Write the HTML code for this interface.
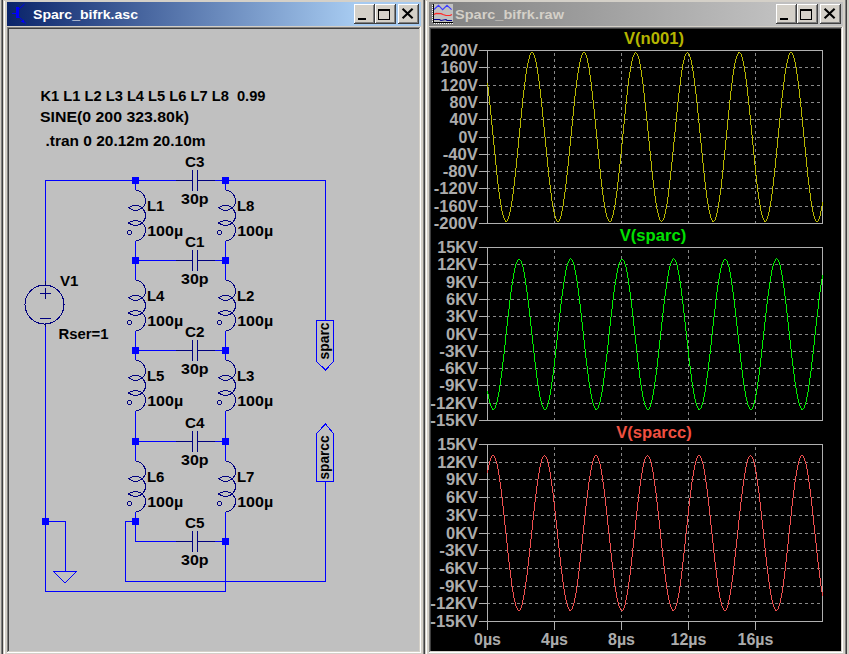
<!DOCTYPE html>
<html><head><meta charset="utf-8"><style>
html,body{margin:0;padding:0;background:#D4D0C8;overflow:hidden}
svg{display:block}
</style></head><body>
<svg width="849" height="654" viewBox="0 0 849 654">
<rect x="0" y="0" width="849" height="654" fill="#D4D0C8"/><rect x="1" y="0" width="1" height="654" fill="#808080"/><rect x="2" y="0" width="1" height="654" fill="#404040"/><rect x="4" y="1" width="1" height="653" fill="#FFFFFF"/><rect x="423" y="0" width="1" height="654" fill="#808080"/><rect x="424" y="0" width="1" height="654" fill="#404040"/><rect x="426" y="1" width="1" height="653" fill="#FFFFFF"/><rect x="845" y="0" width="1" height="654" fill="#808080"/><rect x="846" y="0" width="1" height="654" fill="#404040"/><defs>
<linearGradient id="ga" x1="0" x2="1" y1="0" y2="0"><stop offset="0" stop-color="#0A246A"/><stop offset="0.835" stop-color="#A6CAF0"/><stop offset="1" stop-color="#A6CAF0"/></linearGradient>
<linearGradient id="gi" x1="0" x2="1" y1="0" y2="0"><stop offset="0" stop-color="#808080"/><stop offset="0.835" stop-color="#C0C0C0"/><stop offset="1" stop-color="#C0C0C0"/></linearGradient>
</defs><rect x="7" y="2" width="414" height="24" fill="url(#ga)"/><rect x="429" y="2" width="414" height="24" fill="url(#gi)"/><rect x="7" y="27" width="414" height="1" fill="#808080"/><rect x="7" y="27" width="1" height="626" fill="#808080"/><rect x="8" y="28" width="412" height="1" fill="#404040"/><rect x="8" y="28" width="1" height="624" fill="#404040"/><rect x="7" y="652" width="414" height="1" fill="#FFFFFF"/><rect x="420" y="27" width="1" height="626" fill="#FFFFFF"/><rect x="8" y="651" width="412" height="1" fill="#D4D0C8"/><rect x="419" y="28" width="1" height="624" fill="#D4D0C8"/><rect x="9" y="29" width="410" height="622" fill="#C0C0C0"/><rect x="429" y="27" width="414" height="1" fill="#808080"/><rect x="429" y="27" width="1" height="626" fill="#808080"/><rect x="430" y="28" width="412" height="1" fill="#404040"/><rect x="430" y="28" width="1" height="624" fill="#404040"/><rect x="429" y="652" width="414" height="1" fill="#FFFFFF"/><rect x="842" y="27" width="1" height="626" fill="#FFFFFF"/><rect x="430" y="651" width="412" height="1" fill="#D4D0C8"/><rect x="841" y="28" width="1" height="624" fill="#D4D0C8"/><rect x="431" y="29" width="410" height="622" fill="#000000"/><rect x="354" y="4" width="21" height="20" fill="#404040"/><rect x="354" y="4" width="20" height="19" fill="#FFFFFF"/><rect x="355" y="5" width="19" height="18" fill="#808080"/><rect x="355" y="5" width="18" height="17" fill="#D4D0C8"/><rect x="358" y="18" width="8" height="2" fill="#000"/><rect x="375" y="4" width="21" height="20" fill="#404040"/><rect x="375" y="4" width="20" height="19" fill="#FFFFFF"/><rect x="376" y="5" width="19" height="18" fill="#808080"/><rect x="376" y="5" width="18" height="17" fill="#D4D0C8"/><rect x="378.5" y="9.5" width="11" height="10" fill="none" stroke="#000" stroke-width="1"/><rect x="378" y="9" width="12" height="2" fill="#000"/><rect x="398" y="4" width="21" height="20" fill="#404040"/><rect x="398" y="4" width="20" height="19" fill="#FFFFFF"/><rect x="399" y="5" width="19" height="18" fill="#808080"/><rect x="399" y="5" width="18" height="17" fill="#D4D0C8"/><path d="M402.6,8.8L412.6,18.3M412.6,8.8L402.6,18.3" stroke="#000" stroke-width="2.1" stroke-linecap="butt"/><rect x="776" y="4" width="21" height="20" fill="#404040"/><rect x="776" y="4" width="20" height="19" fill="#FFFFFF"/><rect x="777" y="5" width="19" height="18" fill="#808080"/><rect x="777" y="5" width="18" height="17" fill="#D4D0C8"/><rect x="780" y="18" width="8" height="2" fill="#000"/><rect x="797" y="4" width="21" height="20" fill="#404040"/><rect x="797" y="4" width="20" height="19" fill="#FFFFFF"/><rect x="798" y="5" width="19" height="18" fill="#808080"/><rect x="798" y="5" width="18" height="17" fill="#D4D0C8"/><rect x="800.5" y="9.5" width="11" height="10" fill="none" stroke="#000" stroke-width="1"/><rect x="800" y="9" width="12" height="2" fill="#000"/><rect x="820" y="4" width="21" height="20" fill="#404040"/><rect x="820" y="4" width="20" height="19" fill="#FFFFFF"/><rect x="821" y="5" width="19" height="18" fill="#808080"/><rect x="821" y="5" width="18" height="17" fill="#D4D0C8"/><path d="M824.6,8.8L834.6,18.3M834.6,8.8L824.6,18.3" stroke="#000" stroke-width="2.1" stroke-linecap="butt"/><text x="33" y="18.5" font-family='"Liberation Sans", sans-serif' font-weight="bold" font-size="13" fill="#FFFFFF" textLength="105" lengthAdjust="spacingAndGlyphs">Sparc_bifrk.asc</text><text x="455" y="18.5" font-family='"Liberation Sans", sans-serif' font-weight="bold" font-size="13" fill="#D4D0C8" textLength="109" lengthAdjust="spacingAndGlyphs">Sparc_bifrk.raw</text><g fill="#0000FF" stroke="none"><rect x="12" y="13" width="5" height="1"/><rect x="16" y="7" width="3" height="11"/></g><path d="M18.5,9.5L24.5,4M18.5,16.5L26,23.5" stroke="#0000EE" stroke-width="1"/><path d="M20.5,21.5L24,19.5L24,23Z" fill="#0000FF"/><rect x="433" y="4" width="20" height="19" fill="#C0C0C0"/><rect x="433" y="4" width="1" height="19" fill="#000"/><rect x="433" y="22" width="20" height="1" fill="#000"/><rect x="432" y="5" width="1" height="1" fill="#FFFFFF"/><rect x="432" y="7" width="1" height="1" fill="#FFFFFF"/><rect x="432" y="9" width="1" height="1" fill="#FFFFFF"/><rect x="432" y="11" width="1" height="1" fill="#FFFFFF"/><rect x="432" y="13" width="1" height="1" fill="#FFFFFF"/><rect x="432" y="15" width="1" height="1" fill="#FFFFFF"/><rect x="432" y="17" width="1" height="1" fill="#FFFFFF"/><rect x="432" y="19" width="1" height="1" fill="#FFFFFF"/><rect x="432" y="21" width="1" height="1" fill="#FFFFFF"/><rect x="434" y="23" width="1" height="1" fill="#FFFFFF"/><rect x="436" y="23" width="1" height="1" fill="#FFFFFF"/><rect x="438" y="23" width="1" height="1" fill="#FFFFFF"/><rect x="440" y="23" width="1" height="1" fill="#FFFFFF"/><rect x="442" y="23" width="1" height="1" fill="#FFFFFF"/><rect x="444" y="23" width="1" height="1" fill="#FFFFFF"/><rect x="446" y="23" width="1" height="1" fill="#FFFFFF"/><rect x="448" y="23" width="1" height="1" fill="#FFFFFF"/><rect x="450" y="23" width="1" height="1" fill="#FFFFFF"/><rect x="452" y="23" width="1" height="1" fill="#FFFFFF"/><path d="M434,9.5L438.5,5.3L442.6,9.6L447,5.3L451.6,9.6" fill="none" stroke="#3C3CFF" stroke-width="1.1"/><path d="M434,14.5L436,13.4L441,13.6L443,14.5L446,15.5L450,15.5L452,14.5" fill="none" stroke="#FF2828" stroke-width="1.2"/><path d="M434,19.5H439.5L441,20.5L446,19.5L447,20.5H452" fill="none" stroke="#000090" stroke-width="1.1"/><g><rect x="45" y="180" width="281" height="1" fill="#0000FF"/><rect x="45" y="180" width="1" height="105" fill="#0000FF"/><rect x="45" y="324" width="1" height="268" fill="#0000FF"/><rect x="45" y="591" width="181" height="1" fill="#0000FF"/><rect x="225" y="541" width="1" height="51" fill="#0000FF"/><rect x="45" y="521" width="21" height="1" fill="#0000FF"/><rect x="65" y="521" width="1" height="51" fill="#0000FF"/><rect x="325" y="180" width="1" height="141" fill="#0000FF"/><rect x="325" y="481" width="1" height="101" fill="#0000FF"/><rect x="125" y="581" width="201" height="1" fill="#0000FF"/><rect x="125" y="521" width="1" height="61" fill="#0000FF"/><rect x="125" y="521" width="11" height="1" fill="#0000FF"/><rect x="135" y="521" width="1" height="21" fill="#0000FF"/><rect x="135" y="260" width="91" height="1" fill="#0000FF"/><rect x="135" y="350" width="91" height="1" fill="#0000FF"/><rect x="135" y="441" width="91" height="1" fill="#0000FF"/><rect x="135" y="541" width="91" height="1" fill="#0000FF"/><rect x="135" y="180" width="1" height="342" fill="#0000FF"/><rect x="225" y="180" width="1" height="362" fill="#0000FF"/><rect x="136" y="179" width="88" height="3" fill="#C0C0C0"/><rect x="136" y="180" width="40" height="1" fill="#0000FF"/><rect x="176" y="180" width="17" height="1" fill="#000080"/><rect x="197" y="180" width="18" height="1" fill="#000080"/><rect x="215" y="180" width="10" height="1" fill="#0000FF"/><rect x="192" y="170" width="1" height="21" fill="#000080"/><rect x="197" y="170" width="1" height="21" fill="#000080"/><rect x="136" y="259" width="88" height="3" fill="#C0C0C0"/><rect x="136" y="260" width="40" height="1" fill="#0000FF"/><rect x="176" y="260" width="17" height="1" fill="#000080"/><rect x="197" y="260" width="18" height="1" fill="#000080"/><rect x="215" y="260" width="10" height="1" fill="#0000FF"/><rect x="192" y="250" width="1" height="21" fill="#000080"/><rect x="197" y="250" width="1" height="21" fill="#000080"/><rect x="136" y="349" width="88" height="3" fill="#C0C0C0"/><rect x="136" y="350" width="40" height="1" fill="#0000FF"/><rect x="176" y="350" width="17" height="1" fill="#000080"/><rect x="197" y="350" width="18" height="1" fill="#000080"/><rect x="215" y="350" width="10" height="1" fill="#0000FF"/><rect x="192" y="340" width="1" height="21" fill="#000080"/><rect x="197" y="340" width="1" height="21" fill="#000080"/><rect x="136" y="440" width="88" height="3" fill="#C0C0C0"/><rect x="136" y="441" width="40" height="1" fill="#0000FF"/><rect x="176" y="441" width="17" height="1" fill="#000080"/><rect x="197" y="441" width="18" height="1" fill="#000080"/><rect x="215" y="441" width="10" height="1" fill="#0000FF"/><rect x="192" y="431" width="1" height="21" fill="#000080"/><rect x="197" y="431" width="1" height="21" fill="#000080"/><rect x="136" y="540" width="88" height="3" fill="#C0C0C0"/><rect x="136" y="541" width="40" height="1" fill="#0000FF"/><rect x="176" y="541" width="17" height="1" fill="#000080"/><rect x="197" y="541" width="18" height="1" fill="#000080"/><rect x="215" y="541" width="10" height="1" fill="#0000FF"/><rect x="192" y="531" width="1" height="21" fill="#000080"/><rect x="197" y="531" width="1" height="21" fill="#000080"/><rect x="135" y="190" width="1" height="51" fill="#C0C0C0"/><path d="M135.50,190.50A10,10 0 0 1 142.45,207.69M142.45,208.31A10,10 0 0 1 142.45,222.69M142.45,223.31A10,10 0 0 1 135.50,240.50" fill="none" stroke="#000080" stroke-width="1" shape-rendering="crispEdges"/><path d="M128.5,207.5Q135.5,203.5 142.5,207.5Q135.5,213.5 128.5,207.5Z" fill="none" stroke="#000080" stroke-width="1" shape-rendering="crispEdges"/><path d="M128.5,223.0Q135.5,218.0 142.5,223.0Q135.5,228.0 128.5,223.0Z" fill="none" stroke="#000080" stroke-width="1" shape-rendering="crispEdges"/><circle cx="129.5" cy="232.5" r="2" fill="none" stroke="#000080" stroke-width="1" shape-rendering="crispEdges"/><rect x="135" y="280" width="1" height="51" fill="#C0C0C0"/><path d="M135.50,280.50A10,10 0 0 1 142.45,297.69M142.45,298.31A10,10 0 0 1 142.45,312.69M142.45,313.31A10,10 0 0 1 135.50,330.50" fill="none" stroke="#000080" stroke-width="1" shape-rendering="crispEdges"/><path d="M128.5,297.5Q135.5,293.5 142.5,297.5Q135.5,303.5 128.5,297.5Z" fill="none" stroke="#000080" stroke-width="1" shape-rendering="crispEdges"/><path d="M128.5,313.0Q135.5,308.0 142.5,313.0Q135.5,318.0 128.5,313.0Z" fill="none" stroke="#000080" stroke-width="1" shape-rendering="crispEdges"/><circle cx="129.5" cy="322.5" r="2" fill="none" stroke="#000080" stroke-width="1" shape-rendering="crispEdges"/><rect x="135" y="360" width="1" height="51" fill="#C0C0C0"/><path d="M135.50,360.50A10,10 0 0 1 142.45,377.69M142.45,378.31A10,10 0 0 1 142.45,392.69M142.45,393.31A10,10 0 0 1 135.50,410.50" fill="none" stroke="#000080" stroke-width="1" shape-rendering="crispEdges"/><path d="M128.5,377.5Q135.5,373.5 142.5,377.5Q135.5,383.5 128.5,377.5Z" fill="none" stroke="#000080" stroke-width="1" shape-rendering="crispEdges"/><path d="M128.5,393.0Q135.5,388.0 142.5,393.0Q135.5,398.0 128.5,393.0Z" fill="none" stroke="#000080" stroke-width="1" shape-rendering="crispEdges"/><circle cx="129.5" cy="402.5" r="2" fill="none" stroke="#000080" stroke-width="1" shape-rendering="crispEdges"/><rect x="135" y="461" width="1" height="51" fill="#C0C0C0"/><path d="M135.50,461.50A10,10 0 0 1 142.45,478.69M142.45,479.31A10,10 0 0 1 142.45,493.69M142.45,494.31A10,10 0 0 1 135.50,511.50" fill="none" stroke="#000080" stroke-width="1" shape-rendering="crispEdges"/><path d="M128.5,478.5Q135.5,474.5 142.5,478.5Q135.5,484.5 128.5,478.5Z" fill="none" stroke="#000080" stroke-width="1" shape-rendering="crispEdges"/><path d="M128.5,494.0Q135.5,489.0 142.5,494.0Q135.5,499.0 128.5,494.0Z" fill="none" stroke="#000080" stroke-width="1" shape-rendering="crispEdges"/><circle cx="129.5" cy="503.5" r="2" fill="none" stroke="#000080" stroke-width="1" shape-rendering="crispEdges"/><rect x="225" y="190" width="1" height="51" fill="#C0C0C0"/><path d="M225.50,190.50A10,10 0 0 1 232.45,207.69M232.45,208.31A10,10 0 0 1 232.45,222.69M232.45,223.31A10,10 0 0 1 225.50,240.50" fill="none" stroke="#000080" stroke-width="1" shape-rendering="crispEdges"/><path d="M218.5,207.5Q225.5,203.5 232.5,207.5Q225.5,213.5 218.5,207.5Z" fill="none" stroke="#000080" stroke-width="1" shape-rendering="crispEdges"/><path d="M218.5,223.0Q225.5,218.0 232.5,223.0Q225.5,228.0 218.5,223.0Z" fill="none" stroke="#000080" stroke-width="1" shape-rendering="crispEdges"/><circle cx="219.5" cy="232.5" r="2" fill="none" stroke="#000080" stroke-width="1" shape-rendering="crispEdges"/><rect x="225" y="280" width="1" height="51" fill="#C0C0C0"/><path d="M225.50,280.50A10,10 0 0 1 232.45,297.69M232.45,298.31A10,10 0 0 1 232.45,312.69M232.45,313.31A10,10 0 0 1 225.50,330.50" fill="none" stroke="#000080" stroke-width="1" shape-rendering="crispEdges"/><path d="M218.5,297.5Q225.5,293.5 232.5,297.5Q225.5,303.5 218.5,297.5Z" fill="none" stroke="#000080" stroke-width="1" shape-rendering="crispEdges"/><path d="M218.5,313.0Q225.5,308.0 232.5,313.0Q225.5,318.0 218.5,313.0Z" fill="none" stroke="#000080" stroke-width="1" shape-rendering="crispEdges"/><circle cx="219.5" cy="322.5" r="2" fill="none" stroke="#000080" stroke-width="1" shape-rendering="crispEdges"/><rect x="225" y="360" width="1" height="51" fill="#C0C0C0"/><path d="M225.50,360.50A10,10 0 0 1 232.45,377.69M232.45,378.31A10,10 0 0 1 232.45,392.69M232.45,393.31A10,10 0 0 1 225.50,410.50" fill="none" stroke="#000080" stroke-width="1" shape-rendering="crispEdges"/><path d="M218.5,377.5Q225.5,373.5 232.5,377.5Q225.5,383.5 218.5,377.5Z" fill="none" stroke="#000080" stroke-width="1" shape-rendering="crispEdges"/><path d="M218.5,393.0Q225.5,388.0 232.5,393.0Q225.5,398.0 218.5,393.0Z" fill="none" stroke="#000080" stroke-width="1" shape-rendering="crispEdges"/><circle cx="219.5" cy="402.5" r="2" fill="none" stroke="#000080" stroke-width="1" shape-rendering="crispEdges"/><rect x="225" y="461" width="1" height="51" fill="#C0C0C0"/><path d="M225.50,461.50A10,10 0 0 1 232.45,478.69M232.45,479.31A10,10 0 0 1 232.45,493.69M232.45,494.31A10,10 0 0 1 225.50,511.50" fill="none" stroke="#000080" stroke-width="1" shape-rendering="crispEdges"/><path d="M218.5,478.5Q225.5,474.5 232.5,478.5Q225.5,484.5 218.5,478.5Z" fill="none" stroke="#000080" stroke-width="1" shape-rendering="crispEdges"/><path d="M218.5,494.0Q225.5,489.0 232.5,494.0Q225.5,499.0 218.5,494.0Z" fill="none" stroke="#000080" stroke-width="1" shape-rendering="crispEdges"/><circle cx="219.5" cy="503.5" r="2" fill="none" stroke="#000080" stroke-width="1" shape-rendering="crispEdges"/><rect x="132" y="177" width="7" height="7" fill="#0000FF"/><rect x="222" y="177" width="7" height="7" fill="#0000FF"/><rect x="132" y="257" width="7" height="7" fill="#0000FF"/><rect x="222" y="257" width="7" height="7" fill="#0000FF"/><rect x="132" y="347" width="7" height="7" fill="#0000FF"/><rect x="222" y="347" width="7" height="7" fill="#0000FF"/><rect x="132" y="438" width="7" height="7" fill="#0000FF"/><rect x="222" y="438" width="7" height="7" fill="#0000FF"/><rect x="132" y="518" width="7" height="7" fill="#0000FF"/><rect x="222" y="538" width="7" height="7" fill="#0000FF"/><rect x="42" y="518" width="7" height="7" fill="#0000FF"/><rect x="45" y="285" width="1" height="39" fill="#C0C0C0"/><circle cx="44.5" cy="304.5" r="19.5" fill="none" stroke="#000080" stroke-width="1" shape-rendering="crispEdges"/><rect x="45" y="281" width="1" height="5" fill="#000080"/><rect x="45" y="323" width="1" height="4" fill="#000080"/><rect x="40" y="293" width="11" height="1" fill="#000080"/><rect x="45" y="288" width="1" height="11" fill="#000080"/><rect x="40" y="318" width="11" height="1" fill="#000080"/><path d="M53.5,571.5H76.5L65,583Z" fill="none" stroke="#0000FF" stroke-width="1" shape-rendering="crispEdges"/><path d="M316.5,320.5H333.5V361.5L325.5,370L316.5,361.5Z" fill="none" stroke="#0000FF" stroke-width="1" shape-rendering="crispEdges"/><path d="M325.5,424L333.5,433.5V481.5H316.5V433.5Z" fill="none" stroke="#0000FF" stroke-width="1" shape-rendering="crispEdges"/><text x="40.5" y="100.8" font-family='"Liberation Sans", sans-serif' font-weight="bold" font-size="14" fill="#000" textLength="225" lengthAdjust="spacingAndGlyphs">K1 L1 L2 L3 L4 L5 L6 L7 L8&#160; 0.99</text><text x="40" y="121.6" font-family='"Liberation Sans", sans-serif' font-weight="bold" font-size="14" fill="#000" textLength="149" lengthAdjust="spacingAndGlyphs">SINE(0 200 323.80k)</text><text x="45.5" y="145.5" font-family='"Liberation Sans", sans-serif' font-weight="bold" font-size="14" fill="#000" textLength="160" lengthAdjust="spacingAndGlyphs">.tran 0 20.12m 20.10m</text><text x="60" y="285.8" font-family='"Liberation Sans", sans-serif' font-weight="bold" font-size="14" fill="#000" textLength="18.5" lengthAdjust="spacingAndGlyphs">V1</text><text x="58.5" y="338.5" font-family='"Liberation Sans", sans-serif' font-weight="bold" font-size="14" fill="#000" textLength="50" lengthAdjust="spacingAndGlyphs">Rser=1</text><text x="185" y="166.5" font-family='"Liberation Sans", sans-serif' font-weight="bold" font-size="14" fill="#000" textLength="19.5" lengthAdjust="spacingAndGlyphs">C3</text><text x="181" y="203.7" font-family='"Liberation Sans", sans-serif' font-weight="bold" font-size="14" fill="#000" textLength="27.5" lengthAdjust="spacingAndGlyphs">30p</text><text x="185" y="246.5" font-family='"Liberation Sans", sans-serif' font-weight="bold" font-size="14" fill="#000" textLength="19.5" lengthAdjust="spacingAndGlyphs">C1</text><text x="181" y="283.7" font-family='"Liberation Sans", sans-serif' font-weight="bold" font-size="14" fill="#000" textLength="27.5" lengthAdjust="spacingAndGlyphs">30p</text><text x="185" y="336.5" font-family='"Liberation Sans", sans-serif' font-weight="bold" font-size="14" fill="#000" textLength="19.5" lengthAdjust="spacingAndGlyphs">C2</text><text x="181" y="373.7" font-family='"Liberation Sans", sans-serif' font-weight="bold" font-size="14" fill="#000" textLength="27.5" lengthAdjust="spacingAndGlyphs">30p</text><text x="185" y="427.5" font-family='"Liberation Sans", sans-serif' font-weight="bold" font-size="14" fill="#000" textLength="19.5" lengthAdjust="spacingAndGlyphs">C4</text><text x="181" y="464.7" font-family='"Liberation Sans", sans-serif' font-weight="bold" font-size="14" fill="#000" textLength="27.5" lengthAdjust="spacingAndGlyphs">30p</text><text x="185" y="527.5" font-family='"Liberation Sans", sans-serif' font-weight="bold" font-size="14" fill="#000" textLength="19.5" lengthAdjust="spacingAndGlyphs">C5</text><text x="181" y="564.7" font-family='"Liberation Sans", sans-serif' font-weight="bold" font-size="14" fill="#000" textLength="27.5" lengthAdjust="spacingAndGlyphs">30p</text><text x="146.9" y="211.2" font-family='"Liberation Sans", sans-serif' font-weight="bold" font-size="14" fill="#000" textLength="17.5" lengthAdjust="spacingAndGlyphs">L1</text><text x="147.2" y="236" font-family='"Liberation Sans", sans-serif' font-weight="bold" font-size="14" fill="#000" textLength="36" lengthAdjust="spacingAndGlyphs">100µ</text><text x="146.9" y="301.2" font-family='"Liberation Sans", sans-serif' font-weight="bold" font-size="14" fill="#000" textLength="17.5" lengthAdjust="spacingAndGlyphs">L4</text><text x="147.2" y="326" font-family='"Liberation Sans", sans-serif' font-weight="bold" font-size="14" fill="#000" textLength="36" lengthAdjust="spacingAndGlyphs">100µ</text><text x="146.9" y="381.2" font-family='"Liberation Sans", sans-serif' font-weight="bold" font-size="14" fill="#000" textLength="17.5" lengthAdjust="spacingAndGlyphs">L5</text><text x="147.2" y="406" font-family='"Liberation Sans", sans-serif' font-weight="bold" font-size="14" fill="#000" textLength="36" lengthAdjust="spacingAndGlyphs">100µ</text><text x="146.9" y="482.2" font-family='"Liberation Sans", sans-serif' font-weight="bold" font-size="14" fill="#000" textLength="17.5" lengthAdjust="spacingAndGlyphs">L6</text><text x="147.2" y="507" font-family='"Liberation Sans", sans-serif' font-weight="bold" font-size="14" fill="#000" textLength="36" lengthAdjust="spacingAndGlyphs">100µ</text><text x="236.9" y="211.2" font-family='"Liberation Sans", sans-serif' font-weight="bold" font-size="14" fill="#000" textLength="17.5" lengthAdjust="spacingAndGlyphs">L8</text><text x="237.2" y="236" font-family='"Liberation Sans", sans-serif' font-weight="bold" font-size="14" fill="#000" textLength="36" lengthAdjust="spacingAndGlyphs">100µ</text><text x="236.9" y="301.2" font-family='"Liberation Sans", sans-serif' font-weight="bold" font-size="14" fill="#000" textLength="17.5" lengthAdjust="spacingAndGlyphs">L2</text><text x="237.2" y="326" font-family='"Liberation Sans", sans-serif' font-weight="bold" font-size="14" fill="#000" textLength="36" lengthAdjust="spacingAndGlyphs">100µ</text><text x="236.9" y="381.2" font-family='"Liberation Sans", sans-serif' font-weight="bold" font-size="14" fill="#000" textLength="17.5" lengthAdjust="spacingAndGlyphs">L3</text><text x="237.2" y="406" font-family='"Liberation Sans", sans-serif' font-weight="bold" font-size="14" fill="#000" textLength="36" lengthAdjust="spacingAndGlyphs">100µ</text><text x="236.9" y="482.2" font-family='"Liberation Sans", sans-serif' font-weight="bold" font-size="14" fill="#000" textLength="17.5" lengthAdjust="spacingAndGlyphs">L7</text><text x="237.2" y="507" font-family='"Liberation Sans", sans-serif' font-weight="bold" font-size="14" fill="#000" textLength="36" lengthAdjust="spacingAndGlyphs">100µ</text><text transform="translate(329.3,359.5) rotate(-90)" font-family='"Liberation Sans", sans-serif' font-weight="bold" font-size="14" fill="#000" textLength="37" lengthAdjust="spacingAndGlyphs">sparc</text><text transform="translate(329.3,479.5) rotate(-90)" font-family='"Liberation Sans", sans-serif' font-weight="bold" font-size="14" fill="#000" textLength="44" lengthAdjust="spacingAndGlyphs">sparcc</text></g><g><rect x="479" y="50" width="8" height="1" fill="#B0B0B0"/><text x="478" y="56" text-anchor="end" font-family='"Liberation Sans", sans-serif' font-weight="bold" font-size="16" fill="#ACACAC" textLength="37.39" lengthAdjust="spacingAndGlyphs">200V</text><rect x="479" y="67" width="8" height="1" fill="#B0B0B0"/><path d="M488,67.5h1M489,67.5h1M493,67.5h1M494,67.5h1M495,67.5h1M499,67.5h1M500,67.5h1M501,67.5h1M505,67.5h1M506,67.5h1M507,67.5h1M511,67.5h1M512,67.5h1M513,67.5h1M517,67.5h1M518,67.5h1M519,67.5h1M523,67.5h1M524,67.5h1M525,67.5h1M529,67.5h1M530,67.5h1M531,67.5h1M535,67.5h1M536,67.5h1M537,67.5h1M541,67.5h1M542,67.5h1M543,67.5h1M547,67.5h1M548,67.5h1M549,67.5h1M553,67.5h1M554,67.5h1M555,67.5h1M559,67.5h1M560,67.5h1M561,67.5h1M565,67.5h1M566,67.5h1M567,67.5h1M571,67.5h1M572,67.5h1M573,67.5h1M577,67.5h1M578,67.5h1M579,67.5h1M583,67.5h1M584,67.5h1M585,67.5h1M589,67.5h1M590,67.5h1M591,67.5h1M595,67.5h1M596,67.5h1M597,67.5h1M601,67.5h1M602,67.5h1M603,67.5h1M607,67.5h1M608,67.5h1M609,67.5h1M613,67.5h1M614,67.5h1M615,67.5h1M619,67.5h1M620,67.5h1M621,67.5h1M625,67.5h1M626,67.5h1M627,67.5h1M631,67.5h1M632,67.5h1M633,67.5h1M637,67.5h1M638,67.5h1M639,67.5h1M643,67.5h1M644,67.5h1M645,67.5h1M649,67.5h1M650,67.5h1M651,67.5h1M655,67.5h1M656,67.5h1M657,67.5h1M661,67.5h1M662,67.5h1M663,67.5h1M667,67.5h1M668,67.5h1M669,67.5h1M673,67.5h1M674,67.5h1M675,67.5h1M679,67.5h1M680,67.5h1M681,67.5h1M685,67.5h1M686,67.5h1M687,67.5h1M691,67.5h1M692,67.5h1M693,67.5h1M697,67.5h1M698,67.5h1M699,67.5h1M703,67.5h1M704,67.5h1M705,67.5h1M709,67.5h1M710,67.5h1M711,67.5h1M715,67.5h1M716,67.5h1M717,67.5h1M721,67.5h1M722,67.5h1M723,67.5h1M727,67.5h1M728,67.5h1M729,67.5h1M733,67.5h1M734,67.5h1M735,67.5h1M739,67.5h1M740,67.5h1M741,67.5h1M745,67.5h1M746,67.5h1M747,67.5h1M751,67.5h1M752,67.5h1M753,67.5h1M757,67.5h1M758,67.5h1M759,67.5h1M763,67.5h1M764,67.5h1M765,67.5h1M769,67.5h1M770,67.5h1M771,67.5h1M775,67.5h1M776,67.5h1M777,67.5h1M781,67.5h1M782,67.5h1M783,67.5h1M787,67.5h1M788,67.5h1M789,67.5h1M793,67.5h1M794,67.5h1M795,67.5h1M799,67.5h1M800,67.5h1M801,67.5h1M805,67.5h1M806,67.5h1M807,67.5h1M811,67.5h1M812,67.5h1M813,67.5h1M817,67.5h1M818,67.5h1M819,67.5h1" stroke="#888888" stroke-width="1"/><text x="478" y="73" text-anchor="end" font-family='"Liberation Sans", sans-serif' font-weight="bold" font-size="16" fill="#ACACAC" textLength="37.39" lengthAdjust="spacingAndGlyphs">160V</text><rect x="479" y="85" width="8" height="1" fill="#B0B0B0"/><path d="M488,85.5h1M489,85.5h1M493,85.5h1M494,85.5h1M495,85.5h1M499,85.5h1M500,85.5h1M501,85.5h1M505,85.5h1M506,85.5h1M507,85.5h1M511,85.5h1M512,85.5h1M513,85.5h1M517,85.5h1M518,85.5h1M519,85.5h1M523,85.5h1M524,85.5h1M525,85.5h1M529,85.5h1M530,85.5h1M531,85.5h1M535,85.5h1M536,85.5h1M537,85.5h1M541,85.5h1M542,85.5h1M543,85.5h1M547,85.5h1M548,85.5h1M549,85.5h1M553,85.5h1M554,85.5h1M555,85.5h1M559,85.5h1M560,85.5h1M561,85.5h1M565,85.5h1M566,85.5h1M567,85.5h1M571,85.5h1M572,85.5h1M573,85.5h1M577,85.5h1M578,85.5h1M579,85.5h1M583,85.5h1M584,85.5h1M585,85.5h1M589,85.5h1M590,85.5h1M591,85.5h1M595,85.5h1M596,85.5h1M597,85.5h1M601,85.5h1M602,85.5h1M603,85.5h1M607,85.5h1M608,85.5h1M609,85.5h1M613,85.5h1M614,85.5h1M615,85.5h1M619,85.5h1M620,85.5h1M621,85.5h1M625,85.5h1M626,85.5h1M627,85.5h1M631,85.5h1M632,85.5h1M633,85.5h1M637,85.5h1M638,85.5h1M639,85.5h1M643,85.5h1M644,85.5h1M645,85.5h1M649,85.5h1M650,85.5h1M651,85.5h1M655,85.5h1M656,85.5h1M657,85.5h1M661,85.5h1M662,85.5h1M663,85.5h1M667,85.5h1M668,85.5h1M669,85.5h1M673,85.5h1M674,85.5h1M675,85.5h1M679,85.5h1M680,85.5h1M681,85.5h1M685,85.5h1M686,85.5h1M687,85.5h1M691,85.5h1M692,85.5h1M693,85.5h1M697,85.5h1M698,85.5h1M699,85.5h1M703,85.5h1M704,85.5h1M705,85.5h1M709,85.5h1M710,85.5h1M711,85.5h1M715,85.5h1M716,85.5h1M717,85.5h1M721,85.5h1M722,85.5h1M723,85.5h1M727,85.5h1M728,85.5h1M729,85.5h1M733,85.5h1M734,85.5h1M735,85.5h1M739,85.5h1M740,85.5h1M741,85.5h1M745,85.5h1M746,85.5h1M747,85.5h1M751,85.5h1M752,85.5h1M753,85.5h1M757,85.5h1M758,85.5h1M759,85.5h1M763,85.5h1M764,85.5h1M765,85.5h1M769,85.5h1M770,85.5h1M771,85.5h1M775,85.5h1M776,85.5h1M777,85.5h1M781,85.5h1M782,85.5h1M783,85.5h1M787,85.5h1M788,85.5h1M789,85.5h1M793,85.5h1M794,85.5h1M795,85.5h1M799,85.5h1M800,85.5h1M801,85.5h1M805,85.5h1M806,85.5h1M807,85.5h1M811,85.5h1M812,85.5h1M813,85.5h1M817,85.5h1M818,85.5h1M819,85.5h1" stroke="#888888" stroke-width="1"/><text x="478" y="91" text-anchor="end" font-family='"Liberation Sans", sans-serif' font-weight="bold" font-size="16" fill="#ACACAC" textLength="37.39" lengthAdjust="spacingAndGlyphs">120V</text><rect x="479" y="102" width="8" height="1" fill="#B0B0B0"/><path d="M488,102.5h1M489,102.5h1M493,102.5h1M494,102.5h1M495,102.5h1M499,102.5h1M500,102.5h1M501,102.5h1M505,102.5h1M506,102.5h1M507,102.5h1M511,102.5h1M512,102.5h1M513,102.5h1M517,102.5h1M518,102.5h1M519,102.5h1M523,102.5h1M524,102.5h1M525,102.5h1M529,102.5h1M530,102.5h1M531,102.5h1M535,102.5h1M536,102.5h1M537,102.5h1M541,102.5h1M542,102.5h1M543,102.5h1M547,102.5h1M548,102.5h1M549,102.5h1M553,102.5h1M554,102.5h1M555,102.5h1M559,102.5h1M560,102.5h1M561,102.5h1M565,102.5h1M566,102.5h1M567,102.5h1M571,102.5h1M572,102.5h1M573,102.5h1M577,102.5h1M578,102.5h1M579,102.5h1M583,102.5h1M584,102.5h1M585,102.5h1M589,102.5h1M590,102.5h1M591,102.5h1M595,102.5h1M596,102.5h1M597,102.5h1M601,102.5h1M602,102.5h1M603,102.5h1M607,102.5h1M608,102.5h1M609,102.5h1M613,102.5h1M614,102.5h1M615,102.5h1M619,102.5h1M620,102.5h1M621,102.5h1M625,102.5h1M626,102.5h1M627,102.5h1M631,102.5h1M632,102.5h1M633,102.5h1M637,102.5h1M638,102.5h1M639,102.5h1M643,102.5h1M644,102.5h1M645,102.5h1M649,102.5h1M650,102.5h1M651,102.5h1M655,102.5h1M656,102.5h1M657,102.5h1M661,102.5h1M662,102.5h1M663,102.5h1M667,102.5h1M668,102.5h1M669,102.5h1M673,102.5h1M674,102.5h1M675,102.5h1M679,102.5h1M680,102.5h1M681,102.5h1M685,102.5h1M686,102.5h1M687,102.5h1M691,102.5h1M692,102.5h1M693,102.5h1M697,102.5h1M698,102.5h1M699,102.5h1M703,102.5h1M704,102.5h1M705,102.5h1M709,102.5h1M710,102.5h1M711,102.5h1M715,102.5h1M716,102.5h1M717,102.5h1M721,102.5h1M722,102.5h1M723,102.5h1M727,102.5h1M728,102.5h1M729,102.5h1M733,102.5h1M734,102.5h1M735,102.5h1M739,102.5h1M740,102.5h1M741,102.5h1M745,102.5h1M746,102.5h1M747,102.5h1M751,102.5h1M752,102.5h1M753,102.5h1M757,102.5h1M758,102.5h1M759,102.5h1M763,102.5h1M764,102.5h1M765,102.5h1M769,102.5h1M770,102.5h1M771,102.5h1M775,102.5h1M776,102.5h1M777,102.5h1M781,102.5h1M782,102.5h1M783,102.5h1M787,102.5h1M788,102.5h1M789,102.5h1M793,102.5h1M794,102.5h1M795,102.5h1M799,102.5h1M800,102.5h1M801,102.5h1M805,102.5h1M806,102.5h1M807,102.5h1M811,102.5h1M812,102.5h1M813,102.5h1M817,102.5h1M818,102.5h1M819,102.5h1" stroke="#888888" stroke-width="1"/><text x="478" y="108" text-anchor="end" font-family='"Liberation Sans", sans-serif' font-weight="bold" font-size="16" fill="#ACACAC" textLength="28.48" lengthAdjust="spacingAndGlyphs">80V</text><rect x="479" y="119" width="8" height="1" fill="#B0B0B0"/><path d="M488,119.5h1M489,119.5h1M493,119.5h1M494,119.5h1M495,119.5h1M499,119.5h1M500,119.5h1M501,119.5h1M505,119.5h1M506,119.5h1M507,119.5h1M511,119.5h1M512,119.5h1M513,119.5h1M517,119.5h1M518,119.5h1M519,119.5h1M523,119.5h1M524,119.5h1M525,119.5h1M529,119.5h1M530,119.5h1M531,119.5h1M535,119.5h1M536,119.5h1M537,119.5h1M541,119.5h1M542,119.5h1M543,119.5h1M547,119.5h1M548,119.5h1M549,119.5h1M553,119.5h1M554,119.5h1M555,119.5h1M559,119.5h1M560,119.5h1M561,119.5h1M565,119.5h1M566,119.5h1M567,119.5h1M571,119.5h1M572,119.5h1M573,119.5h1M577,119.5h1M578,119.5h1M579,119.5h1M583,119.5h1M584,119.5h1M585,119.5h1M589,119.5h1M590,119.5h1M591,119.5h1M595,119.5h1M596,119.5h1M597,119.5h1M601,119.5h1M602,119.5h1M603,119.5h1M607,119.5h1M608,119.5h1M609,119.5h1M613,119.5h1M614,119.5h1M615,119.5h1M619,119.5h1M620,119.5h1M621,119.5h1M625,119.5h1M626,119.5h1M627,119.5h1M631,119.5h1M632,119.5h1M633,119.5h1M637,119.5h1M638,119.5h1M639,119.5h1M643,119.5h1M644,119.5h1M645,119.5h1M649,119.5h1M650,119.5h1M651,119.5h1M655,119.5h1M656,119.5h1M657,119.5h1M661,119.5h1M662,119.5h1M663,119.5h1M667,119.5h1M668,119.5h1M669,119.5h1M673,119.5h1M674,119.5h1M675,119.5h1M679,119.5h1M680,119.5h1M681,119.5h1M685,119.5h1M686,119.5h1M687,119.5h1M691,119.5h1M692,119.5h1M693,119.5h1M697,119.5h1M698,119.5h1M699,119.5h1M703,119.5h1M704,119.5h1M705,119.5h1M709,119.5h1M710,119.5h1M711,119.5h1M715,119.5h1M716,119.5h1M717,119.5h1M721,119.5h1M722,119.5h1M723,119.5h1M727,119.5h1M728,119.5h1M729,119.5h1M733,119.5h1M734,119.5h1M735,119.5h1M739,119.5h1M740,119.5h1M741,119.5h1M745,119.5h1M746,119.5h1M747,119.5h1M751,119.5h1M752,119.5h1M753,119.5h1M757,119.5h1M758,119.5h1M759,119.5h1M763,119.5h1M764,119.5h1M765,119.5h1M769,119.5h1M770,119.5h1M771,119.5h1M775,119.5h1M776,119.5h1M777,119.5h1M781,119.5h1M782,119.5h1M783,119.5h1M787,119.5h1M788,119.5h1M789,119.5h1M793,119.5h1M794,119.5h1M795,119.5h1M799,119.5h1M800,119.5h1M801,119.5h1M805,119.5h1M806,119.5h1M807,119.5h1M811,119.5h1M812,119.5h1M813,119.5h1M817,119.5h1M818,119.5h1M819,119.5h1" stroke="#888888" stroke-width="1"/><text x="478" y="125" text-anchor="end" font-family='"Liberation Sans", sans-serif' font-weight="bold" font-size="16" fill="#ACACAC" textLength="28.48" lengthAdjust="spacingAndGlyphs">40V</text><rect x="479" y="137" width="8" height="1" fill="#B0B0B0"/><path d="M488,137.5h1M489,137.5h1M493,137.5h1M494,137.5h1M495,137.5h1M499,137.5h1M500,137.5h1M501,137.5h1M505,137.5h1M506,137.5h1M507,137.5h1M511,137.5h1M512,137.5h1M513,137.5h1M517,137.5h1M518,137.5h1M519,137.5h1M523,137.5h1M524,137.5h1M525,137.5h1M529,137.5h1M530,137.5h1M531,137.5h1M535,137.5h1M536,137.5h1M537,137.5h1M541,137.5h1M542,137.5h1M543,137.5h1M547,137.5h1M548,137.5h1M549,137.5h1M553,137.5h1M554,137.5h1M555,137.5h1M559,137.5h1M560,137.5h1M561,137.5h1M565,137.5h1M566,137.5h1M567,137.5h1M571,137.5h1M572,137.5h1M573,137.5h1M577,137.5h1M578,137.5h1M579,137.5h1M583,137.5h1M584,137.5h1M585,137.5h1M589,137.5h1M590,137.5h1M591,137.5h1M595,137.5h1M596,137.5h1M597,137.5h1M601,137.5h1M602,137.5h1M603,137.5h1M607,137.5h1M608,137.5h1M609,137.5h1M613,137.5h1M614,137.5h1M615,137.5h1M619,137.5h1M620,137.5h1M621,137.5h1M625,137.5h1M626,137.5h1M627,137.5h1M631,137.5h1M632,137.5h1M633,137.5h1M637,137.5h1M638,137.5h1M639,137.5h1M643,137.5h1M644,137.5h1M645,137.5h1M649,137.5h1M650,137.5h1M651,137.5h1M655,137.5h1M656,137.5h1M657,137.5h1M661,137.5h1M662,137.5h1M663,137.5h1M667,137.5h1M668,137.5h1M669,137.5h1M673,137.5h1M674,137.5h1M675,137.5h1M679,137.5h1M680,137.5h1M681,137.5h1M685,137.5h1M686,137.5h1M687,137.5h1M691,137.5h1M692,137.5h1M693,137.5h1M697,137.5h1M698,137.5h1M699,137.5h1M703,137.5h1M704,137.5h1M705,137.5h1M709,137.5h1M710,137.5h1M711,137.5h1M715,137.5h1M716,137.5h1M717,137.5h1M721,137.5h1M722,137.5h1M723,137.5h1M727,137.5h1M728,137.5h1M729,137.5h1M733,137.5h1M734,137.5h1M735,137.5h1M739,137.5h1M740,137.5h1M741,137.5h1M745,137.5h1M746,137.5h1M747,137.5h1M751,137.5h1M752,137.5h1M753,137.5h1M757,137.5h1M758,137.5h1M759,137.5h1M763,137.5h1M764,137.5h1M765,137.5h1M769,137.5h1M770,137.5h1M771,137.5h1M775,137.5h1M776,137.5h1M777,137.5h1M781,137.5h1M782,137.5h1M783,137.5h1M787,137.5h1M788,137.5h1M789,137.5h1M793,137.5h1M794,137.5h1M795,137.5h1M799,137.5h1M800,137.5h1M801,137.5h1M805,137.5h1M806,137.5h1M807,137.5h1M811,137.5h1M812,137.5h1M813,137.5h1M817,137.5h1M818,137.5h1M819,137.5h1" stroke="#888888" stroke-width="1"/><text x="478" y="143" text-anchor="end" font-family='"Liberation Sans", sans-serif' font-weight="bold" font-size="16" fill="#ACACAC" textLength="19.58" lengthAdjust="spacingAndGlyphs">0V</text><rect x="479" y="154" width="8" height="1" fill="#B0B0B0"/><path d="M488,154.5h1M489,154.5h1M493,154.5h1M494,154.5h1M495,154.5h1M499,154.5h1M500,154.5h1M501,154.5h1M505,154.5h1M506,154.5h1M507,154.5h1M511,154.5h1M512,154.5h1M513,154.5h1M517,154.5h1M518,154.5h1M519,154.5h1M523,154.5h1M524,154.5h1M525,154.5h1M529,154.5h1M530,154.5h1M531,154.5h1M535,154.5h1M536,154.5h1M537,154.5h1M541,154.5h1M542,154.5h1M543,154.5h1M547,154.5h1M548,154.5h1M549,154.5h1M553,154.5h1M554,154.5h1M555,154.5h1M559,154.5h1M560,154.5h1M561,154.5h1M565,154.5h1M566,154.5h1M567,154.5h1M571,154.5h1M572,154.5h1M573,154.5h1M577,154.5h1M578,154.5h1M579,154.5h1M583,154.5h1M584,154.5h1M585,154.5h1M589,154.5h1M590,154.5h1M591,154.5h1M595,154.5h1M596,154.5h1M597,154.5h1M601,154.5h1M602,154.5h1M603,154.5h1M607,154.5h1M608,154.5h1M609,154.5h1M613,154.5h1M614,154.5h1M615,154.5h1M619,154.5h1M620,154.5h1M621,154.5h1M625,154.5h1M626,154.5h1M627,154.5h1M631,154.5h1M632,154.5h1M633,154.5h1M637,154.5h1M638,154.5h1M639,154.5h1M643,154.5h1M644,154.5h1M645,154.5h1M649,154.5h1M650,154.5h1M651,154.5h1M655,154.5h1M656,154.5h1M657,154.5h1M661,154.5h1M662,154.5h1M663,154.5h1M667,154.5h1M668,154.5h1M669,154.5h1M673,154.5h1M674,154.5h1M675,154.5h1M679,154.5h1M680,154.5h1M681,154.5h1M685,154.5h1M686,154.5h1M687,154.5h1M691,154.5h1M692,154.5h1M693,154.5h1M697,154.5h1M698,154.5h1M699,154.5h1M703,154.5h1M704,154.5h1M705,154.5h1M709,154.5h1M710,154.5h1M711,154.5h1M715,154.5h1M716,154.5h1M717,154.5h1M721,154.5h1M722,154.5h1M723,154.5h1M727,154.5h1M728,154.5h1M729,154.5h1M733,154.5h1M734,154.5h1M735,154.5h1M739,154.5h1M740,154.5h1M741,154.5h1M745,154.5h1M746,154.5h1M747,154.5h1M751,154.5h1M752,154.5h1M753,154.5h1M757,154.5h1M758,154.5h1M759,154.5h1M763,154.5h1M764,154.5h1M765,154.5h1M769,154.5h1M770,154.5h1M771,154.5h1M775,154.5h1M776,154.5h1M777,154.5h1M781,154.5h1M782,154.5h1M783,154.5h1M787,154.5h1M788,154.5h1M789,154.5h1M793,154.5h1M794,154.5h1M795,154.5h1M799,154.5h1M800,154.5h1M801,154.5h1M805,154.5h1M806,154.5h1M807,154.5h1M811,154.5h1M812,154.5h1M813,154.5h1M817,154.5h1M818,154.5h1M819,154.5h1" stroke="#888888" stroke-width="1"/><text x="478" y="160" text-anchor="end" font-family='"Liberation Sans", sans-serif' font-weight="bold" font-size="16" fill="#ACACAC" textLength="35.31" lengthAdjust="spacingAndGlyphs">-40V</text><rect x="479" y="171" width="8" height="1" fill="#B0B0B0"/><path d="M488,171.5h1M489,171.5h1M493,171.5h1M494,171.5h1M495,171.5h1M499,171.5h1M500,171.5h1M501,171.5h1M505,171.5h1M506,171.5h1M507,171.5h1M511,171.5h1M512,171.5h1M513,171.5h1M517,171.5h1M518,171.5h1M519,171.5h1M523,171.5h1M524,171.5h1M525,171.5h1M529,171.5h1M530,171.5h1M531,171.5h1M535,171.5h1M536,171.5h1M537,171.5h1M541,171.5h1M542,171.5h1M543,171.5h1M547,171.5h1M548,171.5h1M549,171.5h1M553,171.5h1M554,171.5h1M555,171.5h1M559,171.5h1M560,171.5h1M561,171.5h1M565,171.5h1M566,171.5h1M567,171.5h1M571,171.5h1M572,171.5h1M573,171.5h1M577,171.5h1M578,171.5h1M579,171.5h1M583,171.5h1M584,171.5h1M585,171.5h1M589,171.5h1M590,171.5h1M591,171.5h1M595,171.5h1M596,171.5h1M597,171.5h1M601,171.5h1M602,171.5h1M603,171.5h1M607,171.5h1M608,171.5h1M609,171.5h1M613,171.5h1M614,171.5h1M615,171.5h1M619,171.5h1M620,171.5h1M621,171.5h1M625,171.5h1M626,171.5h1M627,171.5h1M631,171.5h1M632,171.5h1M633,171.5h1M637,171.5h1M638,171.5h1M639,171.5h1M643,171.5h1M644,171.5h1M645,171.5h1M649,171.5h1M650,171.5h1M651,171.5h1M655,171.5h1M656,171.5h1M657,171.5h1M661,171.5h1M662,171.5h1M663,171.5h1M667,171.5h1M668,171.5h1M669,171.5h1M673,171.5h1M674,171.5h1M675,171.5h1M679,171.5h1M680,171.5h1M681,171.5h1M685,171.5h1M686,171.5h1M687,171.5h1M691,171.5h1M692,171.5h1M693,171.5h1M697,171.5h1M698,171.5h1M699,171.5h1M703,171.5h1M704,171.5h1M705,171.5h1M709,171.5h1M710,171.5h1M711,171.5h1M715,171.5h1M716,171.5h1M717,171.5h1M721,171.5h1M722,171.5h1M723,171.5h1M727,171.5h1M728,171.5h1M729,171.5h1M733,171.5h1M734,171.5h1M735,171.5h1M739,171.5h1M740,171.5h1M741,171.5h1M745,171.5h1M746,171.5h1M747,171.5h1M751,171.5h1M752,171.5h1M753,171.5h1M757,171.5h1M758,171.5h1M759,171.5h1M763,171.5h1M764,171.5h1M765,171.5h1M769,171.5h1M770,171.5h1M771,171.5h1M775,171.5h1M776,171.5h1M777,171.5h1M781,171.5h1M782,171.5h1M783,171.5h1M787,171.5h1M788,171.5h1M789,171.5h1M793,171.5h1M794,171.5h1M795,171.5h1M799,171.5h1M800,171.5h1M801,171.5h1M805,171.5h1M806,171.5h1M807,171.5h1M811,171.5h1M812,171.5h1M813,171.5h1M817,171.5h1M818,171.5h1M819,171.5h1" stroke="#888888" stroke-width="1"/><text x="478" y="177" text-anchor="end" font-family='"Liberation Sans", sans-serif' font-weight="bold" font-size="16" fill="#ACACAC" textLength="35.31" lengthAdjust="spacingAndGlyphs">-80V</text><rect x="479" y="188" width="8" height="1" fill="#B0B0B0"/><path d="M488,188.5h1M489,188.5h1M493,188.5h1M494,188.5h1M495,188.5h1M499,188.5h1M500,188.5h1M501,188.5h1M505,188.5h1M506,188.5h1M507,188.5h1M511,188.5h1M512,188.5h1M513,188.5h1M517,188.5h1M518,188.5h1M519,188.5h1M523,188.5h1M524,188.5h1M525,188.5h1M529,188.5h1M530,188.5h1M531,188.5h1M535,188.5h1M536,188.5h1M537,188.5h1M541,188.5h1M542,188.5h1M543,188.5h1M547,188.5h1M548,188.5h1M549,188.5h1M553,188.5h1M554,188.5h1M555,188.5h1M559,188.5h1M560,188.5h1M561,188.5h1M565,188.5h1M566,188.5h1M567,188.5h1M571,188.5h1M572,188.5h1M573,188.5h1M577,188.5h1M578,188.5h1M579,188.5h1M583,188.5h1M584,188.5h1M585,188.5h1M589,188.5h1M590,188.5h1M591,188.5h1M595,188.5h1M596,188.5h1M597,188.5h1M601,188.5h1M602,188.5h1M603,188.5h1M607,188.5h1M608,188.5h1M609,188.5h1M613,188.5h1M614,188.5h1M615,188.5h1M619,188.5h1M620,188.5h1M621,188.5h1M625,188.5h1M626,188.5h1M627,188.5h1M631,188.5h1M632,188.5h1M633,188.5h1M637,188.5h1M638,188.5h1M639,188.5h1M643,188.5h1M644,188.5h1M645,188.5h1M649,188.5h1M650,188.5h1M651,188.5h1M655,188.5h1M656,188.5h1M657,188.5h1M661,188.5h1M662,188.5h1M663,188.5h1M667,188.5h1M668,188.5h1M669,188.5h1M673,188.5h1M674,188.5h1M675,188.5h1M679,188.5h1M680,188.5h1M681,188.5h1M685,188.5h1M686,188.5h1M687,188.5h1M691,188.5h1M692,188.5h1M693,188.5h1M697,188.5h1M698,188.5h1M699,188.5h1M703,188.5h1M704,188.5h1M705,188.5h1M709,188.5h1M710,188.5h1M711,188.5h1M715,188.5h1M716,188.5h1M717,188.5h1M721,188.5h1M722,188.5h1M723,188.5h1M727,188.5h1M728,188.5h1M729,188.5h1M733,188.5h1M734,188.5h1M735,188.5h1M739,188.5h1M740,188.5h1M741,188.5h1M745,188.5h1M746,188.5h1M747,188.5h1M751,188.5h1M752,188.5h1M753,188.5h1M757,188.5h1M758,188.5h1M759,188.5h1M763,188.5h1M764,188.5h1M765,188.5h1M769,188.5h1M770,188.5h1M771,188.5h1M775,188.5h1M776,188.5h1M777,188.5h1M781,188.5h1M782,188.5h1M783,188.5h1M787,188.5h1M788,188.5h1M789,188.5h1M793,188.5h1M794,188.5h1M795,188.5h1M799,188.5h1M800,188.5h1M801,188.5h1M805,188.5h1M806,188.5h1M807,188.5h1M811,188.5h1M812,188.5h1M813,188.5h1M817,188.5h1M818,188.5h1M819,188.5h1" stroke="#888888" stroke-width="1"/><text x="478" y="194" text-anchor="end" font-family='"Liberation Sans", sans-serif' font-weight="bold" font-size="16" fill="#ACACAC" textLength="44.22" lengthAdjust="spacingAndGlyphs">-120V</text><rect x="479" y="206" width="8" height="1" fill="#B0B0B0"/><path d="M488,206.5h1M489,206.5h1M493,206.5h1M494,206.5h1M495,206.5h1M499,206.5h1M500,206.5h1M501,206.5h1M505,206.5h1M506,206.5h1M507,206.5h1M511,206.5h1M512,206.5h1M513,206.5h1M517,206.5h1M518,206.5h1M519,206.5h1M523,206.5h1M524,206.5h1M525,206.5h1M529,206.5h1M530,206.5h1M531,206.5h1M535,206.5h1M536,206.5h1M537,206.5h1M541,206.5h1M542,206.5h1M543,206.5h1M547,206.5h1M548,206.5h1M549,206.5h1M553,206.5h1M554,206.5h1M555,206.5h1M559,206.5h1M560,206.5h1M561,206.5h1M565,206.5h1M566,206.5h1M567,206.5h1M571,206.5h1M572,206.5h1M573,206.5h1M577,206.5h1M578,206.5h1M579,206.5h1M583,206.5h1M584,206.5h1M585,206.5h1M589,206.5h1M590,206.5h1M591,206.5h1M595,206.5h1M596,206.5h1M597,206.5h1M601,206.5h1M602,206.5h1M603,206.5h1M607,206.5h1M608,206.5h1M609,206.5h1M613,206.5h1M614,206.5h1M615,206.5h1M619,206.5h1M620,206.5h1M621,206.5h1M625,206.5h1M626,206.5h1M627,206.5h1M631,206.5h1M632,206.5h1M633,206.5h1M637,206.5h1M638,206.5h1M639,206.5h1M643,206.5h1M644,206.5h1M645,206.5h1M649,206.5h1M650,206.5h1M651,206.5h1M655,206.5h1M656,206.5h1M657,206.5h1M661,206.5h1M662,206.5h1M663,206.5h1M667,206.5h1M668,206.5h1M669,206.5h1M673,206.5h1M674,206.5h1M675,206.5h1M679,206.5h1M680,206.5h1M681,206.5h1M685,206.5h1M686,206.5h1M687,206.5h1M691,206.5h1M692,206.5h1M693,206.5h1M697,206.5h1M698,206.5h1M699,206.5h1M703,206.5h1M704,206.5h1M705,206.5h1M709,206.5h1M710,206.5h1M711,206.5h1M715,206.5h1M716,206.5h1M717,206.5h1M721,206.5h1M722,206.5h1M723,206.5h1M727,206.5h1M728,206.5h1M729,206.5h1M733,206.5h1M734,206.5h1M735,206.5h1M739,206.5h1M740,206.5h1M741,206.5h1M745,206.5h1M746,206.5h1M747,206.5h1M751,206.5h1M752,206.5h1M753,206.5h1M757,206.5h1M758,206.5h1M759,206.5h1M763,206.5h1M764,206.5h1M765,206.5h1M769,206.5h1M770,206.5h1M771,206.5h1M775,206.5h1M776,206.5h1M777,206.5h1M781,206.5h1M782,206.5h1M783,206.5h1M787,206.5h1M788,206.5h1M789,206.5h1M793,206.5h1M794,206.5h1M795,206.5h1M799,206.5h1M800,206.5h1M801,206.5h1M805,206.5h1M806,206.5h1M807,206.5h1M811,206.5h1M812,206.5h1M813,206.5h1M817,206.5h1M818,206.5h1M819,206.5h1" stroke="#888888" stroke-width="1"/><text x="478" y="212" text-anchor="end" font-family='"Liberation Sans", sans-serif' font-weight="bold" font-size="16" fill="#ACACAC" textLength="44.22" lengthAdjust="spacingAndGlyphs">-160V</text><rect x="479" y="223" width="8" height="1" fill="#B0B0B0"/><text x="478" y="229" text-anchor="end" font-family='"Liberation Sans", sans-serif' font-weight="bold" font-size="16" fill="#ACACAC" textLength="44.22" lengthAdjust="spacingAndGlyphs">-200V</text><path d="M554.5,53v1M554.5,54v1M554.5,55v1M554.5,59v1M554.5,60v1M554.5,61v1M554.5,65v1M554.5,66v1M554.5,67v1M554.5,71v1M554.5,72v1M554.5,73v1M554.5,77v1M554.5,78v1M554.5,79v1M554.5,83v1M554.5,84v1M554.5,85v1M554.5,89v1M554.5,90v1M554.5,91v1M554.5,95v1M554.5,96v1M554.5,97v1M554.5,101v1M554.5,102v1M554.5,103v1M554.5,107v1M554.5,108v1M554.5,109v1M554.5,113v1M554.5,114v1M554.5,115v1M554.5,119v1M554.5,120v1M554.5,121v1M554.5,125v1M554.5,126v1M554.5,127v1M554.5,131v1M554.5,132v1M554.5,133v1M554.5,137v1M554.5,138v1M554.5,139v1M554.5,143v1M554.5,144v1M554.5,145v1M554.5,149v1M554.5,150v1M554.5,151v1M554.5,155v1M554.5,156v1M554.5,157v1M554.5,161v1M554.5,162v1M554.5,163v1M554.5,167v1M554.5,168v1M554.5,169v1M554.5,173v1M554.5,174v1M554.5,175v1M554.5,179v1M554.5,180v1M554.5,181v1M554.5,185v1M554.5,186v1M554.5,187v1M554.5,191v1M554.5,192v1M554.5,193v1M554.5,197v1M554.5,198v1M554.5,199v1M554.5,203v1M554.5,204v1M554.5,205v1M554.5,209v1M554.5,210v1M554.5,211v1M554.5,215v1M554.5,216v1M554.5,217v1M554.5,221v1M554.5,222v1" stroke="#888888" stroke-width="1"/><path d="M621.5,53v1M621.5,54v1M621.5,55v1M621.5,59v1M621.5,60v1M621.5,61v1M621.5,65v1M621.5,66v1M621.5,67v1M621.5,71v1M621.5,72v1M621.5,73v1M621.5,77v1M621.5,78v1M621.5,79v1M621.5,83v1M621.5,84v1M621.5,85v1M621.5,89v1M621.5,90v1M621.5,91v1M621.5,95v1M621.5,96v1M621.5,97v1M621.5,101v1M621.5,102v1M621.5,103v1M621.5,107v1M621.5,108v1M621.5,109v1M621.5,113v1M621.5,114v1M621.5,115v1M621.5,119v1M621.5,120v1M621.5,121v1M621.5,125v1M621.5,126v1M621.5,127v1M621.5,131v1M621.5,132v1M621.5,133v1M621.5,137v1M621.5,138v1M621.5,139v1M621.5,143v1M621.5,144v1M621.5,145v1M621.5,149v1M621.5,150v1M621.5,151v1M621.5,155v1M621.5,156v1M621.5,157v1M621.5,161v1M621.5,162v1M621.5,163v1M621.5,167v1M621.5,168v1M621.5,169v1M621.5,173v1M621.5,174v1M621.5,175v1M621.5,179v1M621.5,180v1M621.5,181v1M621.5,185v1M621.5,186v1M621.5,187v1M621.5,191v1M621.5,192v1M621.5,193v1M621.5,197v1M621.5,198v1M621.5,199v1M621.5,203v1M621.5,204v1M621.5,205v1M621.5,209v1M621.5,210v1M621.5,211v1M621.5,215v1M621.5,216v1M621.5,217v1M621.5,221v1M621.5,222v1" stroke="#888888" stroke-width="1"/><path d="M688.5,53v1M688.5,54v1M688.5,55v1M688.5,59v1M688.5,60v1M688.5,61v1M688.5,65v1M688.5,66v1M688.5,67v1M688.5,71v1M688.5,72v1M688.5,73v1M688.5,77v1M688.5,78v1M688.5,79v1M688.5,83v1M688.5,84v1M688.5,85v1M688.5,89v1M688.5,90v1M688.5,91v1M688.5,95v1M688.5,96v1M688.5,97v1M688.5,101v1M688.5,102v1M688.5,103v1M688.5,107v1M688.5,108v1M688.5,109v1M688.5,113v1M688.5,114v1M688.5,115v1M688.5,119v1M688.5,120v1M688.5,121v1M688.5,125v1M688.5,126v1M688.5,127v1M688.5,131v1M688.5,132v1M688.5,133v1M688.5,137v1M688.5,138v1M688.5,139v1M688.5,143v1M688.5,144v1M688.5,145v1M688.5,149v1M688.5,150v1M688.5,151v1M688.5,155v1M688.5,156v1M688.5,157v1M688.5,161v1M688.5,162v1M688.5,163v1M688.5,167v1M688.5,168v1M688.5,169v1M688.5,173v1M688.5,174v1M688.5,175v1M688.5,179v1M688.5,180v1M688.5,181v1M688.5,185v1M688.5,186v1M688.5,187v1M688.5,191v1M688.5,192v1M688.5,193v1M688.5,197v1M688.5,198v1M688.5,199v1M688.5,203v1M688.5,204v1M688.5,205v1M688.5,209v1M688.5,210v1M688.5,211v1M688.5,215v1M688.5,216v1M688.5,217v1M688.5,221v1M688.5,222v1" stroke="#888888" stroke-width="1"/><path d="M755.5,53v1M755.5,54v1M755.5,55v1M755.5,59v1M755.5,60v1M755.5,61v1M755.5,65v1M755.5,66v1M755.5,67v1M755.5,71v1M755.5,72v1M755.5,73v1M755.5,77v1M755.5,78v1M755.5,79v1M755.5,83v1M755.5,84v1M755.5,85v1M755.5,89v1M755.5,90v1M755.5,91v1M755.5,95v1M755.5,96v1M755.5,97v1M755.5,101v1M755.5,102v1M755.5,103v1M755.5,107v1M755.5,108v1M755.5,109v1M755.5,113v1M755.5,114v1M755.5,115v1M755.5,119v1M755.5,120v1M755.5,121v1M755.5,125v1M755.5,126v1M755.5,127v1M755.5,131v1M755.5,132v1M755.5,133v1M755.5,137v1M755.5,138v1M755.5,139v1M755.5,143v1M755.5,144v1M755.5,145v1M755.5,149v1M755.5,150v1M755.5,151v1M755.5,155v1M755.5,156v1M755.5,157v1M755.5,161v1M755.5,162v1M755.5,163v1M755.5,167v1M755.5,168v1M755.5,169v1M755.5,173v1M755.5,174v1M755.5,175v1M755.5,179v1M755.5,180v1M755.5,181v1M755.5,185v1M755.5,186v1M755.5,187v1M755.5,191v1M755.5,192v1M755.5,193v1M755.5,197v1M755.5,198v1M755.5,199v1M755.5,203v1M755.5,204v1M755.5,205v1M755.5,209v1M755.5,210v1M755.5,211v1M755.5,215v1M755.5,216v1M755.5,217v1M755.5,221v1M755.5,222v1" stroke="#888888" stroke-width="1"/><rect x="487.5" y="50.5" width="335" height="173" fill="none" stroke="#B0B0B0" stroke-width="1"/><rect x="479" y="247" width="8" height="1" fill="#B0B0B0"/><text x="478" y="253" text-anchor="end" font-family='"Liberation Sans", sans-serif' font-weight="bold" font-size="16" fill="#ACACAC" textLength="40.85" lengthAdjust="spacingAndGlyphs">15KV</text><rect x="479" y="264" width="8" height="1" fill="#B0B0B0"/><path d="M488,264.5h1M489,264.5h1M493,264.5h1M494,264.5h1M495,264.5h1M499,264.5h1M500,264.5h1M501,264.5h1M505,264.5h1M506,264.5h1M507,264.5h1M511,264.5h1M512,264.5h1M513,264.5h1M517,264.5h1M518,264.5h1M519,264.5h1M523,264.5h1M524,264.5h1M525,264.5h1M529,264.5h1M530,264.5h1M531,264.5h1M535,264.5h1M536,264.5h1M537,264.5h1M541,264.5h1M542,264.5h1M543,264.5h1M547,264.5h1M548,264.5h1M549,264.5h1M553,264.5h1M554,264.5h1M555,264.5h1M559,264.5h1M560,264.5h1M561,264.5h1M565,264.5h1M566,264.5h1M567,264.5h1M571,264.5h1M572,264.5h1M573,264.5h1M577,264.5h1M578,264.5h1M579,264.5h1M583,264.5h1M584,264.5h1M585,264.5h1M589,264.5h1M590,264.5h1M591,264.5h1M595,264.5h1M596,264.5h1M597,264.5h1M601,264.5h1M602,264.5h1M603,264.5h1M607,264.5h1M608,264.5h1M609,264.5h1M613,264.5h1M614,264.5h1M615,264.5h1M619,264.5h1M620,264.5h1M621,264.5h1M625,264.5h1M626,264.5h1M627,264.5h1M631,264.5h1M632,264.5h1M633,264.5h1M637,264.5h1M638,264.5h1M639,264.5h1M643,264.5h1M644,264.5h1M645,264.5h1M649,264.5h1M650,264.5h1M651,264.5h1M655,264.5h1M656,264.5h1M657,264.5h1M661,264.5h1M662,264.5h1M663,264.5h1M667,264.5h1M668,264.5h1M669,264.5h1M673,264.5h1M674,264.5h1M675,264.5h1M679,264.5h1M680,264.5h1M681,264.5h1M685,264.5h1M686,264.5h1M687,264.5h1M691,264.5h1M692,264.5h1M693,264.5h1M697,264.5h1M698,264.5h1M699,264.5h1M703,264.5h1M704,264.5h1M705,264.5h1M709,264.5h1M710,264.5h1M711,264.5h1M715,264.5h1M716,264.5h1M717,264.5h1M721,264.5h1M722,264.5h1M723,264.5h1M727,264.5h1M728,264.5h1M729,264.5h1M733,264.5h1M734,264.5h1M735,264.5h1M739,264.5h1M740,264.5h1M741,264.5h1M745,264.5h1M746,264.5h1M747,264.5h1M751,264.5h1M752,264.5h1M753,264.5h1M757,264.5h1M758,264.5h1M759,264.5h1M763,264.5h1M764,264.5h1M765,264.5h1M769,264.5h1M770,264.5h1M771,264.5h1M775,264.5h1M776,264.5h1M777,264.5h1M781,264.5h1M782,264.5h1M783,264.5h1M787,264.5h1M788,264.5h1M789,264.5h1M793,264.5h1M794,264.5h1M795,264.5h1M799,264.5h1M800,264.5h1M801,264.5h1M805,264.5h1M806,264.5h1M807,264.5h1M811,264.5h1M812,264.5h1M813,264.5h1M817,264.5h1M818,264.5h1M819,264.5h1" stroke="#888888" stroke-width="1"/><text x="478" y="270" text-anchor="end" font-family='"Liberation Sans", sans-serif' font-weight="bold" font-size="16" fill="#ACACAC" textLength="40.85" lengthAdjust="spacingAndGlyphs">12KV</text><rect x="479" y="282" width="8" height="1" fill="#B0B0B0"/><path d="M488,282.5h1M489,282.5h1M493,282.5h1M494,282.5h1M495,282.5h1M499,282.5h1M500,282.5h1M501,282.5h1M505,282.5h1M506,282.5h1M507,282.5h1M511,282.5h1M512,282.5h1M513,282.5h1M517,282.5h1M518,282.5h1M519,282.5h1M523,282.5h1M524,282.5h1M525,282.5h1M529,282.5h1M530,282.5h1M531,282.5h1M535,282.5h1M536,282.5h1M537,282.5h1M541,282.5h1M542,282.5h1M543,282.5h1M547,282.5h1M548,282.5h1M549,282.5h1M553,282.5h1M554,282.5h1M555,282.5h1M559,282.5h1M560,282.5h1M561,282.5h1M565,282.5h1M566,282.5h1M567,282.5h1M571,282.5h1M572,282.5h1M573,282.5h1M577,282.5h1M578,282.5h1M579,282.5h1M583,282.5h1M584,282.5h1M585,282.5h1M589,282.5h1M590,282.5h1M591,282.5h1M595,282.5h1M596,282.5h1M597,282.5h1M601,282.5h1M602,282.5h1M603,282.5h1M607,282.5h1M608,282.5h1M609,282.5h1M613,282.5h1M614,282.5h1M615,282.5h1M619,282.5h1M620,282.5h1M621,282.5h1M625,282.5h1M626,282.5h1M627,282.5h1M631,282.5h1M632,282.5h1M633,282.5h1M637,282.5h1M638,282.5h1M639,282.5h1M643,282.5h1M644,282.5h1M645,282.5h1M649,282.5h1M650,282.5h1M651,282.5h1M655,282.5h1M656,282.5h1M657,282.5h1M661,282.5h1M662,282.5h1M663,282.5h1M667,282.5h1M668,282.5h1M669,282.5h1M673,282.5h1M674,282.5h1M675,282.5h1M679,282.5h1M680,282.5h1M681,282.5h1M685,282.5h1M686,282.5h1M687,282.5h1M691,282.5h1M692,282.5h1M693,282.5h1M697,282.5h1M698,282.5h1M699,282.5h1M703,282.5h1M704,282.5h1M705,282.5h1M709,282.5h1M710,282.5h1M711,282.5h1M715,282.5h1M716,282.5h1M717,282.5h1M721,282.5h1M722,282.5h1M723,282.5h1M727,282.5h1M728,282.5h1M729,282.5h1M733,282.5h1M734,282.5h1M735,282.5h1M739,282.5h1M740,282.5h1M741,282.5h1M745,282.5h1M746,282.5h1M747,282.5h1M751,282.5h1M752,282.5h1M753,282.5h1M757,282.5h1M758,282.5h1M759,282.5h1M763,282.5h1M764,282.5h1M765,282.5h1M769,282.5h1M770,282.5h1M771,282.5h1M775,282.5h1M776,282.5h1M777,282.5h1M781,282.5h1M782,282.5h1M783,282.5h1M787,282.5h1M788,282.5h1M789,282.5h1M793,282.5h1M794,282.5h1M795,282.5h1M799,282.5h1M800,282.5h1M801,282.5h1M805,282.5h1M806,282.5h1M807,282.5h1M811,282.5h1M812,282.5h1M813,282.5h1M817,282.5h1M818,282.5h1M819,282.5h1" stroke="#888888" stroke-width="1"/><text x="478" y="288" text-anchor="end" font-family='"Liberation Sans", sans-serif' font-weight="bold" font-size="16" fill="#ACACAC" textLength="31.94" lengthAdjust="spacingAndGlyphs">9KV</text><rect x="479" y="299" width="8" height="1" fill="#B0B0B0"/><path d="M488,299.5h1M489,299.5h1M493,299.5h1M494,299.5h1M495,299.5h1M499,299.5h1M500,299.5h1M501,299.5h1M505,299.5h1M506,299.5h1M507,299.5h1M511,299.5h1M512,299.5h1M513,299.5h1M517,299.5h1M518,299.5h1M519,299.5h1M523,299.5h1M524,299.5h1M525,299.5h1M529,299.5h1M530,299.5h1M531,299.5h1M535,299.5h1M536,299.5h1M537,299.5h1M541,299.5h1M542,299.5h1M543,299.5h1M547,299.5h1M548,299.5h1M549,299.5h1M553,299.5h1M554,299.5h1M555,299.5h1M559,299.5h1M560,299.5h1M561,299.5h1M565,299.5h1M566,299.5h1M567,299.5h1M571,299.5h1M572,299.5h1M573,299.5h1M577,299.5h1M578,299.5h1M579,299.5h1M583,299.5h1M584,299.5h1M585,299.5h1M589,299.5h1M590,299.5h1M591,299.5h1M595,299.5h1M596,299.5h1M597,299.5h1M601,299.5h1M602,299.5h1M603,299.5h1M607,299.5h1M608,299.5h1M609,299.5h1M613,299.5h1M614,299.5h1M615,299.5h1M619,299.5h1M620,299.5h1M621,299.5h1M625,299.5h1M626,299.5h1M627,299.5h1M631,299.5h1M632,299.5h1M633,299.5h1M637,299.5h1M638,299.5h1M639,299.5h1M643,299.5h1M644,299.5h1M645,299.5h1M649,299.5h1M650,299.5h1M651,299.5h1M655,299.5h1M656,299.5h1M657,299.5h1M661,299.5h1M662,299.5h1M663,299.5h1M667,299.5h1M668,299.5h1M669,299.5h1M673,299.5h1M674,299.5h1M675,299.5h1M679,299.5h1M680,299.5h1M681,299.5h1M685,299.5h1M686,299.5h1M687,299.5h1M691,299.5h1M692,299.5h1M693,299.5h1M697,299.5h1M698,299.5h1M699,299.5h1M703,299.5h1M704,299.5h1M705,299.5h1M709,299.5h1M710,299.5h1M711,299.5h1M715,299.5h1M716,299.5h1M717,299.5h1M721,299.5h1M722,299.5h1M723,299.5h1M727,299.5h1M728,299.5h1M729,299.5h1M733,299.5h1M734,299.5h1M735,299.5h1M739,299.5h1M740,299.5h1M741,299.5h1M745,299.5h1M746,299.5h1M747,299.5h1M751,299.5h1M752,299.5h1M753,299.5h1M757,299.5h1M758,299.5h1M759,299.5h1M763,299.5h1M764,299.5h1M765,299.5h1M769,299.5h1M770,299.5h1M771,299.5h1M775,299.5h1M776,299.5h1M777,299.5h1M781,299.5h1M782,299.5h1M783,299.5h1M787,299.5h1M788,299.5h1M789,299.5h1M793,299.5h1M794,299.5h1M795,299.5h1M799,299.5h1M800,299.5h1M801,299.5h1M805,299.5h1M806,299.5h1M807,299.5h1M811,299.5h1M812,299.5h1M813,299.5h1M817,299.5h1M818,299.5h1M819,299.5h1" stroke="#888888" stroke-width="1"/><text x="478" y="305" text-anchor="end" font-family='"Liberation Sans", sans-serif' font-weight="bold" font-size="16" fill="#ACACAC" textLength="31.94" lengthAdjust="spacingAndGlyphs">6KV</text><rect x="479" y="316" width="8" height="1" fill="#B0B0B0"/><path d="M488,316.5h1M489,316.5h1M493,316.5h1M494,316.5h1M495,316.5h1M499,316.5h1M500,316.5h1M501,316.5h1M505,316.5h1M506,316.5h1M507,316.5h1M511,316.5h1M512,316.5h1M513,316.5h1M517,316.5h1M518,316.5h1M519,316.5h1M523,316.5h1M524,316.5h1M525,316.5h1M529,316.5h1M530,316.5h1M531,316.5h1M535,316.5h1M536,316.5h1M537,316.5h1M541,316.5h1M542,316.5h1M543,316.5h1M547,316.5h1M548,316.5h1M549,316.5h1M553,316.5h1M554,316.5h1M555,316.5h1M559,316.5h1M560,316.5h1M561,316.5h1M565,316.5h1M566,316.5h1M567,316.5h1M571,316.5h1M572,316.5h1M573,316.5h1M577,316.5h1M578,316.5h1M579,316.5h1M583,316.5h1M584,316.5h1M585,316.5h1M589,316.5h1M590,316.5h1M591,316.5h1M595,316.5h1M596,316.5h1M597,316.5h1M601,316.5h1M602,316.5h1M603,316.5h1M607,316.5h1M608,316.5h1M609,316.5h1M613,316.5h1M614,316.5h1M615,316.5h1M619,316.5h1M620,316.5h1M621,316.5h1M625,316.5h1M626,316.5h1M627,316.5h1M631,316.5h1M632,316.5h1M633,316.5h1M637,316.5h1M638,316.5h1M639,316.5h1M643,316.5h1M644,316.5h1M645,316.5h1M649,316.5h1M650,316.5h1M651,316.5h1M655,316.5h1M656,316.5h1M657,316.5h1M661,316.5h1M662,316.5h1M663,316.5h1M667,316.5h1M668,316.5h1M669,316.5h1M673,316.5h1M674,316.5h1M675,316.5h1M679,316.5h1M680,316.5h1M681,316.5h1M685,316.5h1M686,316.5h1M687,316.5h1M691,316.5h1M692,316.5h1M693,316.5h1M697,316.5h1M698,316.5h1M699,316.5h1M703,316.5h1M704,316.5h1M705,316.5h1M709,316.5h1M710,316.5h1M711,316.5h1M715,316.5h1M716,316.5h1M717,316.5h1M721,316.5h1M722,316.5h1M723,316.5h1M727,316.5h1M728,316.5h1M729,316.5h1M733,316.5h1M734,316.5h1M735,316.5h1M739,316.5h1M740,316.5h1M741,316.5h1M745,316.5h1M746,316.5h1M747,316.5h1M751,316.5h1M752,316.5h1M753,316.5h1M757,316.5h1M758,316.5h1M759,316.5h1M763,316.5h1M764,316.5h1M765,316.5h1M769,316.5h1M770,316.5h1M771,316.5h1M775,316.5h1M776,316.5h1M777,316.5h1M781,316.5h1M782,316.5h1M783,316.5h1M787,316.5h1M788,316.5h1M789,316.5h1M793,316.5h1M794,316.5h1M795,316.5h1M799,316.5h1M800,316.5h1M801,316.5h1M805,316.5h1M806,316.5h1M807,316.5h1M811,316.5h1M812,316.5h1M813,316.5h1M817,316.5h1M818,316.5h1M819,316.5h1" stroke="#888888" stroke-width="1"/><text x="478" y="322" text-anchor="end" font-family='"Liberation Sans", sans-serif' font-weight="bold" font-size="16" fill="#ACACAC" textLength="31.94" lengthAdjust="spacingAndGlyphs">3KV</text><rect x="479" y="334" width="8" height="1" fill="#B0B0B0"/><path d="M488,334.5h1M489,334.5h1M493,334.5h1M494,334.5h1M495,334.5h1M499,334.5h1M500,334.5h1M501,334.5h1M505,334.5h1M506,334.5h1M507,334.5h1M511,334.5h1M512,334.5h1M513,334.5h1M517,334.5h1M518,334.5h1M519,334.5h1M523,334.5h1M524,334.5h1M525,334.5h1M529,334.5h1M530,334.5h1M531,334.5h1M535,334.5h1M536,334.5h1M537,334.5h1M541,334.5h1M542,334.5h1M543,334.5h1M547,334.5h1M548,334.5h1M549,334.5h1M553,334.5h1M554,334.5h1M555,334.5h1M559,334.5h1M560,334.5h1M561,334.5h1M565,334.5h1M566,334.5h1M567,334.5h1M571,334.5h1M572,334.5h1M573,334.5h1M577,334.5h1M578,334.5h1M579,334.5h1M583,334.5h1M584,334.5h1M585,334.5h1M589,334.5h1M590,334.5h1M591,334.5h1M595,334.5h1M596,334.5h1M597,334.5h1M601,334.5h1M602,334.5h1M603,334.5h1M607,334.5h1M608,334.5h1M609,334.5h1M613,334.5h1M614,334.5h1M615,334.5h1M619,334.5h1M620,334.5h1M621,334.5h1M625,334.5h1M626,334.5h1M627,334.5h1M631,334.5h1M632,334.5h1M633,334.5h1M637,334.5h1M638,334.5h1M639,334.5h1M643,334.5h1M644,334.5h1M645,334.5h1M649,334.5h1M650,334.5h1M651,334.5h1M655,334.5h1M656,334.5h1M657,334.5h1M661,334.5h1M662,334.5h1M663,334.5h1M667,334.5h1M668,334.5h1M669,334.5h1M673,334.5h1M674,334.5h1M675,334.5h1M679,334.5h1M680,334.5h1M681,334.5h1M685,334.5h1M686,334.5h1M687,334.5h1M691,334.5h1M692,334.5h1M693,334.5h1M697,334.5h1M698,334.5h1M699,334.5h1M703,334.5h1M704,334.5h1M705,334.5h1M709,334.5h1M710,334.5h1M711,334.5h1M715,334.5h1M716,334.5h1M717,334.5h1M721,334.5h1M722,334.5h1M723,334.5h1M727,334.5h1M728,334.5h1M729,334.5h1M733,334.5h1M734,334.5h1M735,334.5h1M739,334.5h1M740,334.5h1M741,334.5h1M745,334.5h1M746,334.5h1M747,334.5h1M751,334.5h1M752,334.5h1M753,334.5h1M757,334.5h1M758,334.5h1M759,334.5h1M763,334.5h1M764,334.5h1M765,334.5h1M769,334.5h1M770,334.5h1M771,334.5h1M775,334.5h1M776,334.5h1M777,334.5h1M781,334.5h1M782,334.5h1M783,334.5h1M787,334.5h1M788,334.5h1M789,334.5h1M793,334.5h1M794,334.5h1M795,334.5h1M799,334.5h1M800,334.5h1M801,334.5h1M805,334.5h1M806,334.5h1M807,334.5h1M811,334.5h1M812,334.5h1M813,334.5h1M817,334.5h1M818,334.5h1M819,334.5h1" stroke="#888888" stroke-width="1"/><text x="478" y="340" text-anchor="end" font-family='"Liberation Sans", sans-serif' font-weight="bold" font-size="16" fill="#ACACAC" textLength="31.94" lengthAdjust="spacingAndGlyphs">0KV</text><rect x="479" y="351" width="8" height="1" fill="#B0B0B0"/><path d="M488,351.5h1M489,351.5h1M493,351.5h1M494,351.5h1M495,351.5h1M499,351.5h1M500,351.5h1M501,351.5h1M505,351.5h1M506,351.5h1M507,351.5h1M511,351.5h1M512,351.5h1M513,351.5h1M517,351.5h1M518,351.5h1M519,351.5h1M523,351.5h1M524,351.5h1M525,351.5h1M529,351.5h1M530,351.5h1M531,351.5h1M535,351.5h1M536,351.5h1M537,351.5h1M541,351.5h1M542,351.5h1M543,351.5h1M547,351.5h1M548,351.5h1M549,351.5h1M553,351.5h1M554,351.5h1M555,351.5h1M559,351.5h1M560,351.5h1M561,351.5h1M565,351.5h1M566,351.5h1M567,351.5h1M571,351.5h1M572,351.5h1M573,351.5h1M577,351.5h1M578,351.5h1M579,351.5h1M583,351.5h1M584,351.5h1M585,351.5h1M589,351.5h1M590,351.5h1M591,351.5h1M595,351.5h1M596,351.5h1M597,351.5h1M601,351.5h1M602,351.5h1M603,351.5h1M607,351.5h1M608,351.5h1M609,351.5h1M613,351.5h1M614,351.5h1M615,351.5h1M619,351.5h1M620,351.5h1M621,351.5h1M625,351.5h1M626,351.5h1M627,351.5h1M631,351.5h1M632,351.5h1M633,351.5h1M637,351.5h1M638,351.5h1M639,351.5h1M643,351.5h1M644,351.5h1M645,351.5h1M649,351.5h1M650,351.5h1M651,351.5h1M655,351.5h1M656,351.5h1M657,351.5h1M661,351.5h1M662,351.5h1M663,351.5h1M667,351.5h1M668,351.5h1M669,351.5h1M673,351.5h1M674,351.5h1M675,351.5h1M679,351.5h1M680,351.5h1M681,351.5h1M685,351.5h1M686,351.5h1M687,351.5h1M691,351.5h1M692,351.5h1M693,351.5h1M697,351.5h1M698,351.5h1M699,351.5h1M703,351.5h1M704,351.5h1M705,351.5h1M709,351.5h1M710,351.5h1M711,351.5h1M715,351.5h1M716,351.5h1M717,351.5h1M721,351.5h1M722,351.5h1M723,351.5h1M727,351.5h1M728,351.5h1M729,351.5h1M733,351.5h1M734,351.5h1M735,351.5h1M739,351.5h1M740,351.5h1M741,351.5h1M745,351.5h1M746,351.5h1M747,351.5h1M751,351.5h1M752,351.5h1M753,351.5h1M757,351.5h1M758,351.5h1M759,351.5h1M763,351.5h1M764,351.5h1M765,351.5h1M769,351.5h1M770,351.5h1M771,351.5h1M775,351.5h1M776,351.5h1M777,351.5h1M781,351.5h1M782,351.5h1M783,351.5h1M787,351.5h1M788,351.5h1M789,351.5h1M793,351.5h1M794,351.5h1M795,351.5h1M799,351.5h1M800,351.5h1M801,351.5h1M805,351.5h1M806,351.5h1M807,351.5h1M811,351.5h1M812,351.5h1M813,351.5h1M817,351.5h1M818,351.5h1M819,351.5h1" stroke="#888888" stroke-width="1"/><text x="478" y="357" text-anchor="end" font-family='"Liberation Sans", sans-serif' font-weight="bold" font-size="16" fill="#ACACAC" textLength="38.77" lengthAdjust="spacingAndGlyphs">-3KV</text><rect x="479" y="368" width="8" height="1" fill="#B0B0B0"/><path d="M488,368.5h1M489,368.5h1M493,368.5h1M494,368.5h1M495,368.5h1M499,368.5h1M500,368.5h1M501,368.5h1M505,368.5h1M506,368.5h1M507,368.5h1M511,368.5h1M512,368.5h1M513,368.5h1M517,368.5h1M518,368.5h1M519,368.5h1M523,368.5h1M524,368.5h1M525,368.5h1M529,368.5h1M530,368.5h1M531,368.5h1M535,368.5h1M536,368.5h1M537,368.5h1M541,368.5h1M542,368.5h1M543,368.5h1M547,368.5h1M548,368.5h1M549,368.5h1M553,368.5h1M554,368.5h1M555,368.5h1M559,368.5h1M560,368.5h1M561,368.5h1M565,368.5h1M566,368.5h1M567,368.5h1M571,368.5h1M572,368.5h1M573,368.5h1M577,368.5h1M578,368.5h1M579,368.5h1M583,368.5h1M584,368.5h1M585,368.5h1M589,368.5h1M590,368.5h1M591,368.5h1M595,368.5h1M596,368.5h1M597,368.5h1M601,368.5h1M602,368.5h1M603,368.5h1M607,368.5h1M608,368.5h1M609,368.5h1M613,368.5h1M614,368.5h1M615,368.5h1M619,368.5h1M620,368.5h1M621,368.5h1M625,368.5h1M626,368.5h1M627,368.5h1M631,368.5h1M632,368.5h1M633,368.5h1M637,368.5h1M638,368.5h1M639,368.5h1M643,368.5h1M644,368.5h1M645,368.5h1M649,368.5h1M650,368.5h1M651,368.5h1M655,368.5h1M656,368.5h1M657,368.5h1M661,368.5h1M662,368.5h1M663,368.5h1M667,368.5h1M668,368.5h1M669,368.5h1M673,368.5h1M674,368.5h1M675,368.5h1M679,368.5h1M680,368.5h1M681,368.5h1M685,368.5h1M686,368.5h1M687,368.5h1M691,368.5h1M692,368.5h1M693,368.5h1M697,368.5h1M698,368.5h1M699,368.5h1M703,368.5h1M704,368.5h1M705,368.5h1M709,368.5h1M710,368.5h1M711,368.5h1M715,368.5h1M716,368.5h1M717,368.5h1M721,368.5h1M722,368.5h1M723,368.5h1M727,368.5h1M728,368.5h1M729,368.5h1M733,368.5h1M734,368.5h1M735,368.5h1M739,368.5h1M740,368.5h1M741,368.5h1M745,368.5h1M746,368.5h1M747,368.5h1M751,368.5h1M752,368.5h1M753,368.5h1M757,368.5h1M758,368.5h1M759,368.5h1M763,368.5h1M764,368.5h1M765,368.5h1M769,368.5h1M770,368.5h1M771,368.5h1M775,368.5h1M776,368.5h1M777,368.5h1M781,368.5h1M782,368.5h1M783,368.5h1M787,368.5h1M788,368.5h1M789,368.5h1M793,368.5h1M794,368.5h1M795,368.5h1M799,368.5h1M800,368.5h1M801,368.5h1M805,368.5h1M806,368.5h1M807,368.5h1M811,368.5h1M812,368.5h1M813,368.5h1M817,368.5h1M818,368.5h1M819,368.5h1" stroke="#888888" stroke-width="1"/><text x="478" y="374" text-anchor="end" font-family='"Liberation Sans", sans-serif' font-weight="bold" font-size="16" fill="#ACACAC" textLength="38.77" lengthAdjust="spacingAndGlyphs">-6KV</text><rect x="479" y="385" width="8" height="1" fill="#B0B0B0"/><path d="M488,385.5h1M489,385.5h1M493,385.5h1M494,385.5h1M495,385.5h1M499,385.5h1M500,385.5h1M501,385.5h1M505,385.5h1M506,385.5h1M507,385.5h1M511,385.5h1M512,385.5h1M513,385.5h1M517,385.5h1M518,385.5h1M519,385.5h1M523,385.5h1M524,385.5h1M525,385.5h1M529,385.5h1M530,385.5h1M531,385.5h1M535,385.5h1M536,385.5h1M537,385.5h1M541,385.5h1M542,385.5h1M543,385.5h1M547,385.5h1M548,385.5h1M549,385.5h1M553,385.5h1M554,385.5h1M555,385.5h1M559,385.5h1M560,385.5h1M561,385.5h1M565,385.5h1M566,385.5h1M567,385.5h1M571,385.5h1M572,385.5h1M573,385.5h1M577,385.5h1M578,385.5h1M579,385.5h1M583,385.5h1M584,385.5h1M585,385.5h1M589,385.5h1M590,385.5h1M591,385.5h1M595,385.5h1M596,385.5h1M597,385.5h1M601,385.5h1M602,385.5h1M603,385.5h1M607,385.5h1M608,385.5h1M609,385.5h1M613,385.5h1M614,385.5h1M615,385.5h1M619,385.5h1M620,385.5h1M621,385.5h1M625,385.5h1M626,385.5h1M627,385.5h1M631,385.5h1M632,385.5h1M633,385.5h1M637,385.5h1M638,385.5h1M639,385.5h1M643,385.5h1M644,385.5h1M645,385.5h1M649,385.5h1M650,385.5h1M651,385.5h1M655,385.5h1M656,385.5h1M657,385.5h1M661,385.5h1M662,385.5h1M663,385.5h1M667,385.5h1M668,385.5h1M669,385.5h1M673,385.5h1M674,385.5h1M675,385.5h1M679,385.5h1M680,385.5h1M681,385.5h1M685,385.5h1M686,385.5h1M687,385.5h1M691,385.5h1M692,385.5h1M693,385.5h1M697,385.5h1M698,385.5h1M699,385.5h1M703,385.5h1M704,385.5h1M705,385.5h1M709,385.5h1M710,385.5h1M711,385.5h1M715,385.5h1M716,385.5h1M717,385.5h1M721,385.5h1M722,385.5h1M723,385.5h1M727,385.5h1M728,385.5h1M729,385.5h1M733,385.5h1M734,385.5h1M735,385.5h1M739,385.5h1M740,385.5h1M741,385.5h1M745,385.5h1M746,385.5h1M747,385.5h1M751,385.5h1M752,385.5h1M753,385.5h1M757,385.5h1M758,385.5h1M759,385.5h1M763,385.5h1M764,385.5h1M765,385.5h1M769,385.5h1M770,385.5h1M771,385.5h1M775,385.5h1M776,385.5h1M777,385.5h1M781,385.5h1M782,385.5h1M783,385.5h1M787,385.5h1M788,385.5h1M789,385.5h1M793,385.5h1M794,385.5h1M795,385.5h1M799,385.5h1M800,385.5h1M801,385.5h1M805,385.5h1M806,385.5h1M807,385.5h1M811,385.5h1M812,385.5h1M813,385.5h1M817,385.5h1M818,385.5h1M819,385.5h1" stroke="#888888" stroke-width="1"/><text x="478" y="391" text-anchor="end" font-family='"Liberation Sans", sans-serif' font-weight="bold" font-size="16" fill="#ACACAC" textLength="38.77" lengthAdjust="spacingAndGlyphs">-9KV</text><rect x="479" y="403" width="8" height="1" fill="#B0B0B0"/><path d="M488,403.5h1M489,403.5h1M493,403.5h1M494,403.5h1M495,403.5h1M499,403.5h1M500,403.5h1M501,403.5h1M505,403.5h1M506,403.5h1M507,403.5h1M511,403.5h1M512,403.5h1M513,403.5h1M517,403.5h1M518,403.5h1M519,403.5h1M523,403.5h1M524,403.5h1M525,403.5h1M529,403.5h1M530,403.5h1M531,403.5h1M535,403.5h1M536,403.5h1M537,403.5h1M541,403.5h1M542,403.5h1M543,403.5h1M547,403.5h1M548,403.5h1M549,403.5h1M553,403.5h1M554,403.5h1M555,403.5h1M559,403.5h1M560,403.5h1M561,403.5h1M565,403.5h1M566,403.5h1M567,403.5h1M571,403.5h1M572,403.5h1M573,403.5h1M577,403.5h1M578,403.5h1M579,403.5h1M583,403.5h1M584,403.5h1M585,403.5h1M589,403.5h1M590,403.5h1M591,403.5h1M595,403.5h1M596,403.5h1M597,403.5h1M601,403.5h1M602,403.5h1M603,403.5h1M607,403.5h1M608,403.5h1M609,403.5h1M613,403.5h1M614,403.5h1M615,403.5h1M619,403.5h1M620,403.5h1M621,403.5h1M625,403.5h1M626,403.5h1M627,403.5h1M631,403.5h1M632,403.5h1M633,403.5h1M637,403.5h1M638,403.5h1M639,403.5h1M643,403.5h1M644,403.5h1M645,403.5h1M649,403.5h1M650,403.5h1M651,403.5h1M655,403.5h1M656,403.5h1M657,403.5h1M661,403.5h1M662,403.5h1M663,403.5h1M667,403.5h1M668,403.5h1M669,403.5h1M673,403.5h1M674,403.5h1M675,403.5h1M679,403.5h1M680,403.5h1M681,403.5h1M685,403.5h1M686,403.5h1M687,403.5h1M691,403.5h1M692,403.5h1M693,403.5h1M697,403.5h1M698,403.5h1M699,403.5h1M703,403.5h1M704,403.5h1M705,403.5h1M709,403.5h1M710,403.5h1M711,403.5h1M715,403.5h1M716,403.5h1M717,403.5h1M721,403.5h1M722,403.5h1M723,403.5h1M727,403.5h1M728,403.5h1M729,403.5h1M733,403.5h1M734,403.5h1M735,403.5h1M739,403.5h1M740,403.5h1M741,403.5h1M745,403.5h1M746,403.5h1M747,403.5h1M751,403.5h1M752,403.5h1M753,403.5h1M757,403.5h1M758,403.5h1M759,403.5h1M763,403.5h1M764,403.5h1M765,403.5h1M769,403.5h1M770,403.5h1M771,403.5h1M775,403.5h1M776,403.5h1M777,403.5h1M781,403.5h1M782,403.5h1M783,403.5h1M787,403.5h1M788,403.5h1M789,403.5h1M793,403.5h1M794,403.5h1M795,403.5h1M799,403.5h1M800,403.5h1M801,403.5h1M805,403.5h1M806,403.5h1M807,403.5h1M811,403.5h1M812,403.5h1M813,403.5h1M817,403.5h1M818,403.5h1M819,403.5h1" stroke="#888888" stroke-width="1"/><text x="478" y="409" text-anchor="end" font-family='"Liberation Sans", sans-serif' font-weight="bold" font-size="16" fill="#ACACAC" textLength="47.67" lengthAdjust="spacingAndGlyphs">-12KV</text><rect x="479" y="420" width="8" height="1" fill="#B0B0B0"/><text x="478" y="426" text-anchor="end" font-family='"Liberation Sans", sans-serif' font-weight="bold" font-size="16" fill="#ACACAC" textLength="47.67" lengthAdjust="spacingAndGlyphs">-15KV</text><path d="M554.5,250v1M554.5,251v1M554.5,252v1M554.5,256v1M554.5,257v1M554.5,258v1M554.5,262v1M554.5,263v1M554.5,264v1M554.5,268v1M554.5,269v1M554.5,270v1M554.5,274v1M554.5,275v1M554.5,276v1M554.5,280v1M554.5,281v1M554.5,282v1M554.5,286v1M554.5,287v1M554.5,288v1M554.5,292v1M554.5,293v1M554.5,294v1M554.5,298v1M554.5,299v1M554.5,300v1M554.5,304v1M554.5,305v1M554.5,306v1M554.5,310v1M554.5,311v1M554.5,312v1M554.5,316v1M554.5,317v1M554.5,318v1M554.5,322v1M554.5,323v1M554.5,324v1M554.5,328v1M554.5,329v1M554.5,330v1M554.5,334v1M554.5,335v1M554.5,336v1M554.5,340v1M554.5,341v1M554.5,342v1M554.5,346v1M554.5,347v1M554.5,348v1M554.5,352v1M554.5,353v1M554.5,354v1M554.5,358v1M554.5,359v1M554.5,360v1M554.5,364v1M554.5,365v1M554.5,366v1M554.5,370v1M554.5,371v1M554.5,372v1M554.5,376v1M554.5,377v1M554.5,378v1M554.5,382v1M554.5,383v1M554.5,384v1M554.5,388v1M554.5,389v1M554.5,390v1M554.5,394v1M554.5,395v1M554.5,396v1M554.5,400v1M554.5,401v1M554.5,402v1M554.5,406v1M554.5,407v1M554.5,408v1M554.5,412v1M554.5,413v1M554.5,414v1M554.5,418v1M554.5,419v1" stroke="#888888" stroke-width="1"/><path d="M621.5,250v1M621.5,251v1M621.5,252v1M621.5,256v1M621.5,257v1M621.5,258v1M621.5,262v1M621.5,263v1M621.5,264v1M621.5,268v1M621.5,269v1M621.5,270v1M621.5,274v1M621.5,275v1M621.5,276v1M621.5,280v1M621.5,281v1M621.5,282v1M621.5,286v1M621.5,287v1M621.5,288v1M621.5,292v1M621.5,293v1M621.5,294v1M621.5,298v1M621.5,299v1M621.5,300v1M621.5,304v1M621.5,305v1M621.5,306v1M621.5,310v1M621.5,311v1M621.5,312v1M621.5,316v1M621.5,317v1M621.5,318v1M621.5,322v1M621.5,323v1M621.5,324v1M621.5,328v1M621.5,329v1M621.5,330v1M621.5,334v1M621.5,335v1M621.5,336v1M621.5,340v1M621.5,341v1M621.5,342v1M621.5,346v1M621.5,347v1M621.5,348v1M621.5,352v1M621.5,353v1M621.5,354v1M621.5,358v1M621.5,359v1M621.5,360v1M621.5,364v1M621.5,365v1M621.5,366v1M621.5,370v1M621.5,371v1M621.5,372v1M621.5,376v1M621.5,377v1M621.5,378v1M621.5,382v1M621.5,383v1M621.5,384v1M621.5,388v1M621.5,389v1M621.5,390v1M621.5,394v1M621.5,395v1M621.5,396v1M621.5,400v1M621.5,401v1M621.5,402v1M621.5,406v1M621.5,407v1M621.5,408v1M621.5,412v1M621.5,413v1M621.5,414v1M621.5,418v1M621.5,419v1" stroke="#888888" stroke-width="1"/><path d="M688.5,250v1M688.5,251v1M688.5,252v1M688.5,256v1M688.5,257v1M688.5,258v1M688.5,262v1M688.5,263v1M688.5,264v1M688.5,268v1M688.5,269v1M688.5,270v1M688.5,274v1M688.5,275v1M688.5,276v1M688.5,280v1M688.5,281v1M688.5,282v1M688.5,286v1M688.5,287v1M688.5,288v1M688.5,292v1M688.5,293v1M688.5,294v1M688.5,298v1M688.5,299v1M688.5,300v1M688.5,304v1M688.5,305v1M688.5,306v1M688.5,310v1M688.5,311v1M688.5,312v1M688.5,316v1M688.5,317v1M688.5,318v1M688.5,322v1M688.5,323v1M688.5,324v1M688.5,328v1M688.5,329v1M688.5,330v1M688.5,334v1M688.5,335v1M688.5,336v1M688.5,340v1M688.5,341v1M688.5,342v1M688.5,346v1M688.5,347v1M688.5,348v1M688.5,352v1M688.5,353v1M688.5,354v1M688.5,358v1M688.5,359v1M688.5,360v1M688.5,364v1M688.5,365v1M688.5,366v1M688.5,370v1M688.5,371v1M688.5,372v1M688.5,376v1M688.5,377v1M688.5,378v1M688.5,382v1M688.5,383v1M688.5,384v1M688.5,388v1M688.5,389v1M688.5,390v1M688.5,394v1M688.5,395v1M688.5,396v1M688.5,400v1M688.5,401v1M688.5,402v1M688.5,406v1M688.5,407v1M688.5,408v1M688.5,412v1M688.5,413v1M688.5,414v1M688.5,418v1M688.5,419v1" stroke="#888888" stroke-width="1"/><path d="M755.5,250v1M755.5,251v1M755.5,252v1M755.5,256v1M755.5,257v1M755.5,258v1M755.5,262v1M755.5,263v1M755.5,264v1M755.5,268v1M755.5,269v1M755.5,270v1M755.5,274v1M755.5,275v1M755.5,276v1M755.5,280v1M755.5,281v1M755.5,282v1M755.5,286v1M755.5,287v1M755.5,288v1M755.5,292v1M755.5,293v1M755.5,294v1M755.5,298v1M755.5,299v1M755.5,300v1M755.5,304v1M755.5,305v1M755.5,306v1M755.5,310v1M755.5,311v1M755.5,312v1M755.5,316v1M755.5,317v1M755.5,318v1M755.5,322v1M755.5,323v1M755.5,324v1M755.5,328v1M755.5,329v1M755.5,330v1M755.5,334v1M755.5,335v1M755.5,336v1M755.5,340v1M755.5,341v1M755.5,342v1M755.5,346v1M755.5,347v1M755.5,348v1M755.5,352v1M755.5,353v1M755.5,354v1M755.5,358v1M755.5,359v1M755.5,360v1M755.5,364v1M755.5,365v1M755.5,366v1M755.5,370v1M755.5,371v1M755.5,372v1M755.5,376v1M755.5,377v1M755.5,378v1M755.5,382v1M755.5,383v1M755.5,384v1M755.5,388v1M755.5,389v1M755.5,390v1M755.5,394v1M755.5,395v1M755.5,396v1M755.5,400v1M755.5,401v1M755.5,402v1M755.5,406v1M755.5,407v1M755.5,408v1M755.5,412v1M755.5,413v1M755.5,414v1M755.5,418v1M755.5,419v1" stroke="#888888" stroke-width="1"/><rect x="487.5" y="247.5" width="335" height="173" fill="none" stroke="#B0B0B0" stroke-width="1"/><rect x="479" y="444" width="8" height="1" fill="#B0B0B0"/><text x="478" y="450" text-anchor="end" font-family='"Liberation Sans", sans-serif' font-weight="bold" font-size="16" fill="#ACACAC" textLength="40.85" lengthAdjust="spacingAndGlyphs">15KV</text><rect x="479" y="462" width="8" height="1" fill="#B0B0B0"/><path d="M488,462.5h1M489,462.5h1M493,462.5h1M494,462.5h1M495,462.5h1M499,462.5h1M500,462.5h1M501,462.5h1M505,462.5h1M506,462.5h1M507,462.5h1M511,462.5h1M512,462.5h1M513,462.5h1M517,462.5h1M518,462.5h1M519,462.5h1M523,462.5h1M524,462.5h1M525,462.5h1M529,462.5h1M530,462.5h1M531,462.5h1M535,462.5h1M536,462.5h1M537,462.5h1M541,462.5h1M542,462.5h1M543,462.5h1M547,462.5h1M548,462.5h1M549,462.5h1M553,462.5h1M554,462.5h1M555,462.5h1M559,462.5h1M560,462.5h1M561,462.5h1M565,462.5h1M566,462.5h1M567,462.5h1M571,462.5h1M572,462.5h1M573,462.5h1M577,462.5h1M578,462.5h1M579,462.5h1M583,462.5h1M584,462.5h1M585,462.5h1M589,462.5h1M590,462.5h1M591,462.5h1M595,462.5h1M596,462.5h1M597,462.5h1M601,462.5h1M602,462.5h1M603,462.5h1M607,462.5h1M608,462.5h1M609,462.5h1M613,462.5h1M614,462.5h1M615,462.5h1M619,462.5h1M620,462.5h1M621,462.5h1M625,462.5h1M626,462.5h1M627,462.5h1M631,462.5h1M632,462.5h1M633,462.5h1M637,462.5h1M638,462.5h1M639,462.5h1M643,462.5h1M644,462.5h1M645,462.5h1M649,462.5h1M650,462.5h1M651,462.5h1M655,462.5h1M656,462.5h1M657,462.5h1M661,462.5h1M662,462.5h1M663,462.5h1M667,462.5h1M668,462.5h1M669,462.5h1M673,462.5h1M674,462.5h1M675,462.5h1M679,462.5h1M680,462.5h1M681,462.5h1M685,462.5h1M686,462.5h1M687,462.5h1M691,462.5h1M692,462.5h1M693,462.5h1M697,462.5h1M698,462.5h1M699,462.5h1M703,462.5h1M704,462.5h1M705,462.5h1M709,462.5h1M710,462.5h1M711,462.5h1M715,462.5h1M716,462.5h1M717,462.5h1M721,462.5h1M722,462.5h1M723,462.5h1M727,462.5h1M728,462.5h1M729,462.5h1M733,462.5h1M734,462.5h1M735,462.5h1M739,462.5h1M740,462.5h1M741,462.5h1M745,462.5h1M746,462.5h1M747,462.5h1M751,462.5h1M752,462.5h1M753,462.5h1M757,462.5h1M758,462.5h1M759,462.5h1M763,462.5h1M764,462.5h1M765,462.5h1M769,462.5h1M770,462.5h1M771,462.5h1M775,462.5h1M776,462.5h1M777,462.5h1M781,462.5h1M782,462.5h1M783,462.5h1M787,462.5h1M788,462.5h1M789,462.5h1M793,462.5h1M794,462.5h1M795,462.5h1M799,462.5h1M800,462.5h1M801,462.5h1M805,462.5h1M806,462.5h1M807,462.5h1M811,462.5h1M812,462.5h1M813,462.5h1M817,462.5h1M818,462.5h1M819,462.5h1" stroke="#888888" stroke-width="1"/><text x="478" y="468" text-anchor="end" font-family='"Liberation Sans", sans-serif' font-weight="bold" font-size="16" fill="#ACACAC" textLength="40.85" lengthAdjust="spacingAndGlyphs">12KV</text><rect x="479" y="479" width="8" height="1" fill="#B0B0B0"/><path d="M488,479.5h1M489,479.5h1M493,479.5h1M494,479.5h1M495,479.5h1M499,479.5h1M500,479.5h1M501,479.5h1M505,479.5h1M506,479.5h1M507,479.5h1M511,479.5h1M512,479.5h1M513,479.5h1M517,479.5h1M518,479.5h1M519,479.5h1M523,479.5h1M524,479.5h1M525,479.5h1M529,479.5h1M530,479.5h1M531,479.5h1M535,479.5h1M536,479.5h1M537,479.5h1M541,479.5h1M542,479.5h1M543,479.5h1M547,479.5h1M548,479.5h1M549,479.5h1M553,479.5h1M554,479.5h1M555,479.5h1M559,479.5h1M560,479.5h1M561,479.5h1M565,479.5h1M566,479.5h1M567,479.5h1M571,479.5h1M572,479.5h1M573,479.5h1M577,479.5h1M578,479.5h1M579,479.5h1M583,479.5h1M584,479.5h1M585,479.5h1M589,479.5h1M590,479.5h1M591,479.5h1M595,479.5h1M596,479.5h1M597,479.5h1M601,479.5h1M602,479.5h1M603,479.5h1M607,479.5h1M608,479.5h1M609,479.5h1M613,479.5h1M614,479.5h1M615,479.5h1M619,479.5h1M620,479.5h1M621,479.5h1M625,479.5h1M626,479.5h1M627,479.5h1M631,479.5h1M632,479.5h1M633,479.5h1M637,479.5h1M638,479.5h1M639,479.5h1M643,479.5h1M644,479.5h1M645,479.5h1M649,479.5h1M650,479.5h1M651,479.5h1M655,479.5h1M656,479.5h1M657,479.5h1M661,479.5h1M662,479.5h1M663,479.5h1M667,479.5h1M668,479.5h1M669,479.5h1M673,479.5h1M674,479.5h1M675,479.5h1M679,479.5h1M680,479.5h1M681,479.5h1M685,479.5h1M686,479.5h1M687,479.5h1M691,479.5h1M692,479.5h1M693,479.5h1M697,479.5h1M698,479.5h1M699,479.5h1M703,479.5h1M704,479.5h1M705,479.5h1M709,479.5h1M710,479.5h1M711,479.5h1M715,479.5h1M716,479.5h1M717,479.5h1M721,479.5h1M722,479.5h1M723,479.5h1M727,479.5h1M728,479.5h1M729,479.5h1M733,479.5h1M734,479.5h1M735,479.5h1M739,479.5h1M740,479.5h1M741,479.5h1M745,479.5h1M746,479.5h1M747,479.5h1M751,479.5h1M752,479.5h1M753,479.5h1M757,479.5h1M758,479.5h1M759,479.5h1M763,479.5h1M764,479.5h1M765,479.5h1M769,479.5h1M770,479.5h1M771,479.5h1M775,479.5h1M776,479.5h1M777,479.5h1M781,479.5h1M782,479.5h1M783,479.5h1M787,479.5h1M788,479.5h1M789,479.5h1M793,479.5h1M794,479.5h1M795,479.5h1M799,479.5h1M800,479.5h1M801,479.5h1M805,479.5h1M806,479.5h1M807,479.5h1M811,479.5h1M812,479.5h1M813,479.5h1M817,479.5h1M818,479.5h1M819,479.5h1" stroke="#888888" stroke-width="1"/><text x="478" y="485" text-anchor="end" font-family='"Liberation Sans", sans-serif' font-weight="bold" font-size="16" fill="#ACACAC" textLength="31.94" lengthAdjust="spacingAndGlyphs">9KV</text><rect x="479" y="497" width="8" height="1" fill="#B0B0B0"/><path d="M488,497.5h1M489,497.5h1M493,497.5h1M494,497.5h1M495,497.5h1M499,497.5h1M500,497.5h1M501,497.5h1M505,497.5h1M506,497.5h1M507,497.5h1M511,497.5h1M512,497.5h1M513,497.5h1M517,497.5h1M518,497.5h1M519,497.5h1M523,497.5h1M524,497.5h1M525,497.5h1M529,497.5h1M530,497.5h1M531,497.5h1M535,497.5h1M536,497.5h1M537,497.5h1M541,497.5h1M542,497.5h1M543,497.5h1M547,497.5h1M548,497.5h1M549,497.5h1M553,497.5h1M554,497.5h1M555,497.5h1M559,497.5h1M560,497.5h1M561,497.5h1M565,497.5h1M566,497.5h1M567,497.5h1M571,497.5h1M572,497.5h1M573,497.5h1M577,497.5h1M578,497.5h1M579,497.5h1M583,497.5h1M584,497.5h1M585,497.5h1M589,497.5h1M590,497.5h1M591,497.5h1M595,497.5h1M596,497.5h1M597,497.5h1M601,497.5h1M602,497.5h1M603,497.5h1M607,497.5h1M608,497.5h1M609,497.5h1M613,497.5h1M614,497.5h1M615,497.5h1M619,497.5h1M620,497.5h1M621,497.5h1M625,497.5h1M626,497.5h1M627,497.5h1M631,497.5h1M632,497.5h1M633,497.5h1M637,497.5h1M638,497.5h1M639,497.5h1M643,497.5h1M644,497.5h1M645,497.5h1M649,497.5h1M650,497.5h1M651,497.5h1M655,497.5h1M656,497.5h1M657,497.5h1M661,497.5h1M662,497.5h1M663,497.5h1M667,497.5h1M668,497.5h1M669,497.5h1M673,497.5h1M674,497.5h1M675,497.5h1M679,497.5h1M680,497.5h1M681,497.5h1M685,497.5h1M686,497.5h1M687,497.5h1M691,497.5h1M692,497.5h1M693,497.5h1M697,497.5h1M698,497.5h1M699,497.5h1M703,497.5h1M704,497.5h1M705,497.5h1M709,497.5h1M710,497.5h1M711,497.5h1M715,497.5h1M716,497.5h1M717,497.5h1M721,497.5h1M722,497.5h1M723,497.5h1M727,497.5h1M728,497.5h1M729,497.5h1M733,497.5h1M734,497.5h1M735,497.5h1M739,497.5h1M740,497.5h1M741,497.5h1M745,497.5h1M746,497.5h1M747,497.5h1M751,497.5h1M752,497.5h1M753,497.5h1M757,497.5h1M758,497.5h1M759,497.5h1M763,497.5h1M764,497.5h1M765,497.5h1M769,497.5h1M770,497.5h1M771,497.5h1M775,497.5h1M776,497.5h1M777,497.5h1M781,497.5h1M782,497.5h1M783,497.5h1M787,497.5h1M788,497.5h1M789,497.5h1M793,497.5h1M794,497.5h1M795,497.5h1M799,497.5h1M800,497.5h1M801,497.5h1M805,497.5h1M806,497.5h1M807,497.5h1M811,497.5h1M812,497.5h1M813,497.5h1M817,497.5h1M818,497.5h1M819,497.5h1" stroke="#888888" stroke-width="1"/><text x="478" y="503" text-anchor="end" font-family='"Liberation Sans", sans-serif' font-weight="bold" font-size="16" fill="#ACACAC" textLength="31.94" lengthAdjust="spacingAndGlyphs">6KV</text><rect x="479" y="515" width="8" height="1" fill="#B0B0B0"/><path d="M488,515.5h1M489,515.5h1M493,515.5h1M494,515.5h1M495,515.5h1M499,515.5h1M500,515.5h1M501,515.5h1M505,515.5h1M506,515.5h1M507,515.5h1M511,515.5h1M512,515.5h1M513,515.5h1M517,515.5h1M518,515.5h1M519,515.5h1M523,515.5h1M524,515.5h1M525,515.5h1M529,515.5h1M530,515.5h1M531,515.5h1M535,515.5h1M536,515.5h1M537,515.5h1M541,515.5h1M542,515.5h1M543,515.5h1M547,515.5h1M548,515.5h1M549,515.5h1M553,515.5h1M554,515.5h1M555,515.5h1M559,515.5h1M560,515.5h1M561,515.5h1M565,515.5h1M566,515.5h1M567,515.5h1M571,515.5h1M572,515.5h1M573,515.5h1M577,515.5h1M578,515.5h1M579,515.5h1M583,515.5h1M584,515.5h1M585,515.5h1M589,515.5h1M590,515.5h1M591,515.5h1M595,515.5h1M596,515.5h1M597,515.5h1M601,515.5h1M602,515.5h1M603,515.5h1M607,515.5h1M608,515.5h1M609,515.5h1M613,515.5h1M614,515.5h1M615,515.5h1M619,515.5h1M620,515.5h1M621,515.5h1M625,515.5h1M626,515.5h1M627,515.5h1M631,515.5h1M632,515.5h1M633,515.5h1M637,515.5h1M638,515.5h1M639,515.5h1M643,515.5h1M644,515.5h1M645,515.5h1M649,515.5h1M650,515.5h1M651,515.5h1M655,515.5h1M656,515.5h1M657,515.5h1M661,515.5h1M662,515.5h1M663,515.5h1M667,515.5h1M668,515.5h1M669,515.5h1M673,515.5h1M674,515.5h1M675,515.5h1M679,515.5h1M680,515.5h1M681,515.5h1M685,515.5h1M686,515.5h1M687,515.5h1M691,515.5h1M692,515.5h1M693,515.5h1M697,515.5h1M698,515.5h1M699,515.5h1M703,515.5h1M704,515.5h1M705,515.5h1M709,515.5h1M710,515.5h1M711,515.5h1M715,515.5h1M716,515.5h1M717,515.5h1M721,515.5h1M722,515.5h1M723,515.5h1M727,515.5h1M728,515.5h1M729,515.5h1M733,515.5h1M734,515.5h1M735,515.5h1M739,515.5h1M740,515.5h1M741,515.5h1M745,515.5h1M746,515.5h1M747,515.5h1M751,515.5h1M752,515.5h1M753,515.5h1M757,515.5h1M758,515.5h1M759,515.5h1M763,515.5h1M764,515.5h1M765,515.5h1M769,515.5h1M770,515.5h1M771,515.5h1M775,515.5h1M776,515.5h1M777,515.5h1M781,515.5h1M782,515.5h1M783,515.5h1M787,515.5h1M788,515.5h1M789,515.5h1M793,515.5h1M794,515.5h1M795,515.5h1M799,515.5h1M800,515.5h1M801,515.5h1M805,515.5h1M806,515.5h1M807,515.5h1M811,515.5h1M812,515.5h1M813,515.5h1M817,515.5h1M818,515.5h1M819,515.5h1" stroke="#888888" stroke-width="1"/><text x="478" y="521" text-anchor="end" font-family='"Liberation Sans", sans-serif' font-weight="bold" font-size="16" fill="#ACACAC" textLength="31.94" lengthAdjust="spacingAndGlyphs">3KV</text><rect x="479" y="533" width="8" height="1" fill="#B0B0B0"/><path d="M488,533.5h1M489,533.5h1M493,533.5h1M494,533.5h1M495,533.5h1M499,533.5h1M500,533.5h1M501,533.5h1M505,533.5h1M506,533.5h1M507,533.5h1M511,533.5h1M512,533.5h1M513,533.5h1M517,533.5h1M518,533.5h1M519,533.5h1M523,533.5h1M524,533.5h1M525,533.5h1M529,533.5h1M530,533.5h1M531,533.5h1M535,533.5h1M536,533.5h1M537,533.5h1M541,533.5h1M542,533.5h1M543,533.5h1M547,533.5h1M548,533.5h1M549,533.5h1M553,533.5h1M554,533.5h1M555,533.5h1M559,533.5h1M560,533.5h1M561,533.5h1M565,533.5h1M566,533.5h1M567,533.5h1M571,533.5h1M572,533.5h1M573,533.5h1M577,533.5h1M578,533.5h1M579,533.5h1M583,533.5h1M584,533.5h1M585,533.5h1M589,533.5h1M590,533.5h1M591,533.5h1M595,533.5h1M596,533.5h1M597,533.5h1M601,533.5h1M602,533.5h1M603,533.5h1M607,533.5h1M608,533.5h1M609,533.5h1M613,533.5h1M614,533.5h1M615,533.5h1M619,533.5h1M620,533.5h1M621,533.5h1M625,533.5h1M626,533.5h1M627,533.5h1M631,533.5h1M632,533.5h1M633,533.5h1M637,533.5h1M638,533.5h1M639,533.5h1M643,533.5h1M644,533.5h1M645,533.5h1M649,533.5h1M650,533.5h1M651,533.5h1M655,533.5h1M656,533.5h1M657,533.5h1M661,533.5h1M662,533.5h1M663,533.5h1M667,533.5h1M668,533.5h1M669,533.5h1M673,533.5h1M674,533.5h1M675,533.5h1M679,533.5h1M680,533.5h1M681,533.5h1M685,533.5h1M686,533.5h1M687,533.5h1M691,533.5h1M692,533.5h1M693,533.5h1M697,533.5h1M698,533.5h1M699,533.5h1M703,533.5h1M704,533.5h1M705,533.5h1M709,533.5h1M710,533.5h1M711,533.5h1M715,533.5h1M716,533.5h1M717,533.5h1M721,533.5h1M722,533.5h1M723,533.5h1M727,533.5h1M728,533.5h1M729,533.5h1M733,533.5h1M734,533.5h1M735,533.5h1M739,533.5h1M740,533.5h1M741,533.5h1M745,533.5h1M746,533.5h1M747,533.5h1M751,533.5h1M752,533.5h1M753,533.5h1M757,533.5h1M758,533.5h1M759,533.5h1M763,533.5h1M764,533.5h1M765,533.5h1M769,533.5h1M770,533.5h1M771,533.5h1M775,533.5h1M776,533.5h1M777,533.5h1M781,533.5h1M782,533.5h1M783,533.5h1M787,533.5h1M788,533.5h1M789,533.5h1M793,533.5h1M794,533.5h1M795,533.5h1M799,533.5h1M800,533.5h1M801,533.5h1M805,533.5h1M806,533.5h1M807,533.5h1M811,533.5h1M812,533.5h1M813,533.5h1M817,533.5h1M818,533.5h1M819,533.5h1" stroke="#888888" stroke-width="1"/><text x="478" y="539" text-anchor="end" font-family='"Liberation Sans", sans-serif' font-weight="bold" font-size="16" fill="#ACACAC" textLength="31.94" lengthAdjust="spacingAndGlyphs">0KV</text><rect x="479" y="550" width="8" height="1" fill="#B0B0B0"/><path d="M488,550.5h1M489,550.5h1M493,550.5h1M494,550.5h1M495,550.5h1M499,550.5h1M500,550.5h1M501,550.5h1M505,550.5h1M506,550.5h1M507,550.5h1M511,550.5h1M512,550.5h1M513,550.5h1M517,550.5h1M518,550.5h1M519,550.5h1M523,550.5h1M524,550.5h1M525,550.5h1M529,550.5h1M530,550.5h1M531,550.5h1M535,550.5h1M536,550.5h1M537,550.5h1M541,550.5h1M542,550.5h1M543,550.5h1M547,550.5h1M548,550.5h1M549,550.5h1M553,550.5h1M554,550.5h1M555,550.5h1M559,550.5h1M560,550.5h1M561,550.5h1M565,550.5h1M566,550.5h1M567,550.5h1M571,550.5h1M572,550.5h1M573,550.5h1M577,550.5h1M578,550.5h1M579,550.5h1M583,550.5h1M584,550.5h1M585,550.5h1M589,550.5h1M590,550.5h1M591,550.5h1M595,550.5h1M596,550.5h1M597,550.5h1M601,550.5h1M602,550.5h1M603,550.5h1M607,550.5h1M608,550.5h1M609,550.5h1M613,550.5h1M614,550.5h1M615,550.5h1M619,550.5h1M620,550.5h1M621,550.5h1M625,550.5h1M626,550.5h1M627,550.5h1M631,550.5h1M632,550.5h1M633,550.5h1M637,550.5h1M638,550.5h1M639,550.5h1M643,550.5h1M644,550.5h1M645,550.5h1M649,550.5h1M650,550.5h1M651,550.5h1M655,550.5h1M656,550.5h1M657,550.5h1M661,550.5h1M662,550.5h1M663,550.5h1M667,550.5h1M668,550.5h1M669,550.5h1M673,550.5h1M674,550.5h1M675,550.5h1M679,550.5h1M680,550.5h1M681,550.5h1M685,550.5h1M686,550.5h1M687,550.5h1M691,550.5h1M692,550.5h1M693,550.5h1M697,550.5h1M698,550.5h1M699,550.5h1M703,550.5h1M704,550.5h1M705,550.5h1M709,550.5h1M710,550.5h1M711,550.5h1M715,550.5h1M716,550.5h1M717,550.5h1M721,550.5h1M722,550.5h1M723,550.5h1M727,550.5h1M728,550.5h1M729,550.5h1M733,550.5h1M734,550.5h1M735,550.5h1M739,550.5h1M740,550.5h1M741,550.5h1M745,550.5h1M746,550.5h1M747,550.5h1M751,550.5h1M752,550.5h1M753,550.5h1M757,550.5h1M758,550.5h1M759,550.5h1M763,550.5h1M764,550.5h1M765,550.5h1M769,550.5h1M770,550.5h1M771,550.5h1M775,550.5h1M776,550.5h1M777,550.5h1M781,550.5h1M782,550.5h1M783,550.5h1M787,550.5h1M788,550.5h1M789,550.5h1M793,550.5h1M794,550.5h1M795,550.5h1M799,550.5h1M800,550.5h1M801,550.5h1M805,550.5h1M806,550.5h1M807,550.5h1M811,550.5h1M812,550.5h1M813,550.5h1M817,550.5h1M818,550.5h1M819,550.5h1" stroke="#888888" stroke-width="1"/><text x="478" y="556" text-anchor="end" font-family='"Liberation Sans", sans-serif' font-weight="bold" font-size="16" fill="#ACACAC" textLength="38.77" lengthAdjust="spacingAndGlyphs">-3KV</text><rect x="479" y="568" width="8" height="1" fill="#B0B0B0"/><path d="M488,568.5h1M489,568.5h1M493,568.5h1M494,568.5h1M495,568.5h1M499,568.5h1M500,568.5h1M501,568.5h1M505,568.5h1M506,568.5h1M507,568.5h1M511,568.5h1M512,568.5h1M513,568.5h1M517,568.5h1M518,568.5h1M519,568.5h1M523,568.5h1M524,568.5h1M525,568.5h1M529,568.5h1M530,568.5h1M531,568.5h1M535,568.5h1M536,568.5h1M537,568.5h1M541,568.5h1M542,568.5h1M543,568.5h1M547,568.5h1M548,568.5h1M549,568.5h1M553,568.5h1M554,568.5h1M555,568.5h1M559,568.5h1M560,568.5h1M561,568.5h1M565,568.5h1M566,568.5h1M567,568.5h1M571,568.5h1M572,568.5h1M573,568.5h1M577,568.5h1M578,568.5h1M579,568.5h1M583,568.5h1M584,568.5h1M585,568.5h1M589,568.5h1M590,568.5h1M591,568.5h1M595,568.5h1M596,568.5h1M597,568.5h1M601,568.5h1M602,568.5h1M603,568.5h1M607,568.5h1M608,568.5h1M609,568.5h1M613,568.5h1M614,568.5h1M615,568.5h1M619,568.5h1M620,568.5h1M621,568.5h1M625,568.5h1M626,568.5h1M627,568.5h1M631,568.5h1M632,568.5h1M633,568.5h1M637,568.5h1M638,568.5h1M639,568.5h1M643,568.5h1M644,568.5h1M645,568.5h1M649,568.5h1M650,568.5h1M651,568.5h1M655,568.5h1M656,568.5h1M657,568.5h1M661,568.5h1M662,568.5h1M663,568.5h1M667,568.5h1M668,568.5h1M669,568.5h1M673,568.5h1M674,568.5h1M675,568.5h1M679,568.5h1M680,568.5h1M681,568.5h1M685,568.5h1M686,568.5h1M687,568.5h1M691,568.5h1M692,568.5h1M693,568.5h1M697,568.5h1M698,568.5h1M699,568.5h1M703,568.5h1M704,568.5h1M705,568.5h1M709,568.5h1M710,568.5h1M711,568.5h1M715,568.5h1M716,568.5h1M717,568.5h1M721,568.5h1M722,568.5h1M723,568.5h1M727,568.5h1M728,568.5h1M729,568.5h1M733,568.5h1M734,568.5h1M735,568.5h1M739,568.5h1M740,568.5h1M741,568.5h1M745,568.5h1M746,568.5h1M747,568.5h1M751,568.5h1M752,568.5h1M753,568.5h1M757,568.5h1M758,568.5h1M759,568.5h1M763,568.5h1M764,568.5h1M765,568.5h1M769,568.5h1M770,568.5h1M771,568.5h1M775,568.5h1M776,568.5h1M777,568.5h1M781,568.5h1M782,568.5h1M783,568.5h1M787,568.5h1M788,568.5h1M789,568.5h1M793,568.5h1M794,568.5h1M795,568.5h1M799,568.5h1M800,568.5h1M801,568.5h1M805,568.5h1M806,568.5h1M807,568.5h1M811,568.5h1M812,568.5h1M813,568.5h1M817,568.5h1M818,568.5h1M819,568.5h1" stroke="#888888" stroke-width="1"/><text x="478" y="574" text-anchor="end" font-family='"Liberation Sans", sans-serif' font-weight="bold" font-size="16" fill="#ACACAC" textLength="38.77" lengthAdjust="spacingAndGlyphs">-6KV</text><rect x="479" y="586" width="8" height="1" fill="#B0B0B0"/><path d="M488,586.5h1M489,586.5h1M493,586.5h1M494,586.5h1M495,586.5h1M499,586.5h1M500,586.5h1M501,586.5h1M505,586.5h1M506,586.5h1M507,586.5h1M511,586.5h1M512,586.5h1M513,586.5h1M517,586.5h1M518,586.5h1M519,586.5h1M523,586.5h1M524,586.5h1M525,586.5h1M529,586.5h1M530,586.5h1M531,586.5h1M535,586.5h1M536,586.5h1M537,586.5h1M541,586.5h1M542,586.5h1M543,586.5h1M547,586.5h1M548,586.5h1M549,586.5h1M553,586.5h1M554,586.5h1M555,586.5h1M559,586.5h1M560,586.5h1M561,586.5h1M565,586.5h1M566,586.5h1M567,586.5h1M571,586.5h1M572,586.5h1M573,586.5h1M577,586.5h1M578,586.5h1M579,586.5h1M583,586.5h1M584,586.5h1M585,586.5h1M589,586.5h1M590,586.5h1M591,586.5h1M595,586.5h1M596,586.5h1M597,586.5h1M601,586.5h1M602,586.5h1M603,586.5h1M607,586.5h1M608,586.5h1M609,586.5h1M613,586.5h1M614,586.5h1M615,586.5h1M619,586.5h1M620,586.5h1M621,586.5h1M625,586.5h1M626,586.5h1M627,586.5h1M631,586.5h1M632,586.5h1M633,586.5h1M637,586.5h1M638,586.5h1M639,586.5h1M643,586.5h1M644,586.5h1M645,586.5h1M649,586.5h1M650,586.5h1M651,586.5h1M655,586.5h1M656,586.5h1M657,586.5h1M661,586.5h1M662,586.5h1M663,586.5h1M667,586.5h1M668,586.5h1M669,586.5h1M673,586.5h1M674,586.5h1M675,586.5h1M679,586.5h1M680,586.5h1M681,586.5h1M685,586.5h1M686,586.5h1M687,586.5h1M691,586.5h1M692,586.5h1M693,586.5h1M697,586.5h1M698,586.5h1M699,586.5h1M703,586.5h1M704,586.5h1M705,586.5h1M709,586.5h1M710,586.5h1M711,586.5h1M715,586.5h1M716,586.5h1M717,586.5h1M721,586.5h1M722,586.5h1M723,586.5h1M727,586.5h1M728,586.5h1M729,586.5h1M733,586.5h1M734,586.5h1M735,586.5h1M739,586.5h1M740,586.5h1M741,586.5h1M745,586.5h1M746,586.5h1M747,586.5h1M751,586.5h1M752,586.5h1M753,586.5h1M757,586.5h1M758,586.5h1M759,586.5h1M763,586.5h1M764,586.5h1M765,586.5h1M769,586.5h1M770,586.5h1M771,586.5h1M775,586.5h1M776,586.5h1M777,586.5h1M781,586.5h1M782,586.5h1M783,586.5h1M787,586.5h1M788,586.5h1M789,586.5h1M793,586.5h1M794,586.5h1M795,586.5h1M799,586.5h1M800,586.5h1M801,586.5h1M805,586.5h1M806,586.5h1M807,586.5h1M811,586.5h1M812,586.5h1M813,586.5h1M817,586.5h1M818,586.5h1M819,586.5h1" stroke="#888888" stroke-width="1"/><text x="478" y="592" text-anchor="end" font-family='"Liberation Sans", sans-serif' font-weight="bold" font-size="16" fill="#ACACAC" textLength="38.77" lengthAdjust="spacingAndGlyphs">-9KV</text><rect x="479" y="603" width="8" height="1" fill="#B0B0B0"/><path d="M488,603.5h1M489,603.5h1M493,603.5h1M494,603.5h1M495,603.5h1M499,603.5h1M500,603.5h1M501,603.5h1M505,603.5h1M506,603.5h1M507,603.5h1M511,603.5h1M512,603.5h1M513,603.5h1M517,603.5h1M518,603.5h1M519,603.5h1M523,603.5h1M524,603.5h1M525,603.5h1M529,603.5h1M530,603.5h1M531,603.5h1M535,603.5h1M536,603.5h1M537,603.5h1M541,603.5h1M542,603.5h1M543,603.5h1M547,603.5h1M548,603.5h1M549,603.5h1M553,603.5h1M554,603.5h1M555,603.5h1M559,603.5h1M560,603.5h1M561,603.5h1M565,603.5h1M566,603.5h1M567,603.5h1M571,603.5h1M572,603.5h1M573,603.5h1M577,603.5h1M578,603.5h1M579,603.5h1M583,603.5h1M584,603.5h1M585,603.5h1M589,603.5h1M590,603.5h1M591,603.5h1M595,603.5h1M596,603.5h1M597,603.5h1M601,603.5h1M602,603.5h1M603,603.5h1M607,603.5h1M608,603.5h1M609,603.5h1M613,603.5h1M614,603.5h1M615,603.5h1M619,603.5h1M620,603.5h1M621,603.5h1M625,603.5h1M626,603.5h1M627,603.5h1M631,603.5h1M632,603.5h1M633,603.5h1M637,603.5h1M638,603.5h1M639,603.5h1M643,603.5h1M644,603.5h1M645,603.5h1M649,603.5h1M650,603.5h1M651,603.5h1M655,603.5h1M656,603.5h1M657,603.5h1M661,603.5h1M662,603.5h1M663,603.5h1M667,603.5h1M668,603.5h1M669,603.5h1M673,603.5h1M674,603.5h1M675,603.5h1M679,603.5h1M680,603.5h1M681,603.5h1M685,603.5h1M686,603.5h1M687,603.5h1M691,603.5h1M692,603.5h1M693,603.5h1M697,603.5h1M698,603.5h1M699,603.5h1M703,603.5h1M704,603.5h1M705,603.5h1M709,603.5h1M710,603.5h1M711,603.5h1M715,603.5h1M716,603.5h1M717,603.5h1M721,603.5h1M722,603.5h1M723,603.5h1M727,603.5h1M728,603.5h1M729,603.5h1M733,603.5h1M734,603.5h1M735,603.5h1M739,603.5h1M740,603.5h1M741,603.5h1M745,603.5h1M746,603.5h1M747,603.5h1M751,603.5h1M752,603.5h1M753,603.5h1M757,603.5h1M758,603.5h1M759,603.5h1M763,603.5h1M764,603.5h1M765,603.5h1M769,603.5h1M770,603.5h1M771,603.5h1M775,603.5h1M776,603.5h1M777,603.5h1M781,603.5h1M782,603.5h1M783,603.5h1M787,603.5h1M788,603.5h1M789,603.5h1M793,603.5h1M794,603.5h1M795,603.5h1M799,603.5h1M800,603.5h1M801,603.5h1M805,603.5h1M806,603.5h1M807,603.5h1M811,603.5h1M812,603.5h1M813,603.5h1M817,603.5h1M818,603.5h1M819,603.5h1" stroke="#888888" stroke-width="1"/><text x="478" y="609" text-anchor="end" font-family='"Liberation Sans", sans-serif' font-weight="bold" font-size="16" fill="#ACACAC" textLength="47.67" lengthAdjust="spacingAndGlyphs">-12KV</text><rect x="479" y="621" width="8" height="1" fill="#B0B0B0"/><text x="478" y="627" text-anchor="end" font-family='"Liberation Sans", sans-serif' font-weight="bold" font-size="16" fill="#ACACAC" textLength="47.67" lengthAdjust="spacingAndGlyphs">-15KV</text><path d="M554.5,447v1M554.5,448v1M554.5,449v1M554.5,453v1M554.5,454v1M554.5,455v1M554.5,459v1M554.5,460v1M554.5,461v1M554.5,465v1M554.5,466v1M554.5,467v1M554.5,471v1M554.5,472v1M554.5,473v1M554.5,477v1M554.5,478v1M554.5,479v1M554.5,483v1M554.5,484v1M554.5,485v1M554.5,489v1M554.5,490v1M554.5,491v1M554.5,495v1M554.5,496v1M554.5,497v1M554.5,501v1M554.5,502v1M554.5,503v1M554.5,507v1M554.5,508v1M554.5,509v1M554.5,513v1M554.5,514v1M554.5,515v1M554.5,519v1M554.5,520v1M554.5,521v1M554.5,525v1M554.5,526v1M554.5,527v1M554.5,531v1M554.5,532v1M554.5,533v1M554.5,537v1M554.5,538v1M554.5,539v1M554.5,543v1M554.5,544v1M554.5,545v1M554.5,549v1M554.5,550v1M554.5,551v1M554.5,555v1M554.5,556v1M554.5,557v1M554.5,561v1M554.5,562v1M554.5,563v1M554.5,567v1M554.5,568v1M554.5,569v1M554.5,573v1M554.5,574v1M554.5,575v1M554.5,579v1M554.5,580v1M554.5,581v1M554.5,585v1M554.5,586v1M554.5,587v1M554.5,591v1M554.5,592v1M554.5,593v1M554.5,597v1M554.5,598v1M554.5,599v1M554.5,603v1M554.5,604v1M554.5,605v1M554.5,609v1M554.5,610v1M554.5,611v1M554.5,615v1M554.5,616v1M554.5,617v1" stroke="#888888" stroke-width="1"/><path d="M621.5,447v1M621.5,448v1M621.5,449v1M621.5,453v1M621.5,454v1M621.5,455v1M621.5,459v1M621.5,460v1M621.5,461v1M621.5,465v1M621.5,466v1M621.5,467v1M621.5,471v1M621.5,472v1M621.5,473v1M621.5,477v1M621.5,478v1M621.5,479v1M621.5,483v1M621.5,484v1M621.5,485v1M621.5,489v1M621.5,490v1M621.5,491v1M621.5,495v1M621.5,496v1M621.5,497v1M621.5,501v1M621.5,502v1M621.5,503v1M621.5,507v1M621.5,508v1M621.5,509v1M621.5,513v1M621.5,514v1M621.5,515v1M621.5,519v1M621.5,520v1M621.5,521v1M621.5,525v1M621.5,526v1M621.5,527v1M621.5,531v1M621.5,532v1M621.5,533v1M621.5,537v1M621.5,538v1M621.5,539v1M621.5,543v1M621.5,544v1M621.5,545v1M621.5,549v1M621.5,550v1M621.5,551v1M621.5,555v1M621.5,556v1M621.5,557v1M621.5,561v1M621.5,562v1M621.5,563v1M621.5,567v1M621.5,568v1M621.5,569v1M621.5,573v1M621.5,574v1M621.5,575v1M621.5,579v1M621.5,580v1M621.5,581v1M621.5,585v1M621.5,586v1M621.5,587v1M621.5,591v1M621.5,592v1M621.5,593v1M621.5,597v1M621.5,598v1M621.5,599v1M621.5,603v1M621.5,604v1M621.5,605v1M621.5,609v1M621.5,610v1M621.5,611v1M621.5,615v1M621.5,616v1M621.5,617v1" stroke="#888888" stroke-width="1"/><path d="M688.5,447v1M688.5,448v1M688.5,449v1M688.5,453v1M688.5,454v1M688.5,455v1M688.5,459v1M688.5,460v1M688.5,461v1M688.5,465v1M688.5,466v1M688.5,467v1M688.5,471v1M688.5,472v1M688.5,473v1M688.5,477v1M688.5,478v1M688.5,479v1M688.5,483v1M688.5,484v1M688.5,485v1M688.5,489v1M688.5,490v1M688.5,491v1M688.5,495v1M688.5,496v1M688.5,497v1M688.5,501v1M688.5,502v1M688.5,503v1M688.5,507v1M688.5,508v1M688.5,509v1M688.5,513v1M688.5,514v1M688.5,515v1M688.5,519v1M688.5,520v1M688.5,521v1M688.5,525v1M688.5,526v1M688.5,527v1M688.5,531v1M688.5,532v1M688.5,533v1M688.5,537v1M688.5,538v1M688.5,539v1M688.5,543v1M688.5,544v1M688.5,545v1M688.5,549v1M688.5,550v1M688.5,551v1M688.5,555v1M688.5,556v1M688.5,557v1M688.5,561v1M688.5,562v1M688.5,563v1M688.5,567v1M688.5,568v1M688.5,569v1M688.5,573v1M688.5,574v1M688.5,575v1M688.5,579v1M688.5,580v1M688.5,581v1M688.5,585v1M688.5,586v1M688.5,587v1M688.5,591v1M688.5,592v1M688.5,593v1M688.5,597v1M688.5,598v1M688.5,599v1M688.5,603v1M688.5,604v1M688.5,605v1M688.5,609v1M688.5,610v1M688.5,611v1M688.5,615v1M688.5,616v1M688.5,617v1" stroke="#888888" stroke-width="1"/><path d="M755.5,447v1M755.5,448v1M755.5,449v1M755.5,453v1M755.5,454v1M755.5,455v1M755.5,459v1M755.5,460v1M755.5,461v1M755.5,465v1M755.5,466v1M755.5,467v1M755.5,471v1M755.5,472v1M755.5,473v1M755.5,477v1M755.5,478v1M755.5,479v1M755.5,483v1M755.5,484v1M755.5,485v1M755.5,489v1M755.5,490v1M755.5,491v1M755.5,495v1M755.5,496v1M755.5,497v1M755.5,501v1M755.5,502v1M755.5,503v1M755.5,507v1M755.5,508v1M755.5,509v1M755.5,513v1M755.5,514v1M755.5,515v1M755.5,519v1M755.5,520v1M755.5,521v1M755.5,525v1M755.5,526v1M755.5,527v1M755.5,531v1M755.5,532v1M755.5,533v1M755.5,537v1M755.5,538v1M755.5,539v1M755.5,543v1M755.5,544v1M755.5,545v1M755.5,549v1M755.5,550v1M755.5,551v1M755.5,555v1M755.5,556v1M755.5,557v1M755.5,561v1M755.5,562v1M755.5,563v1M755.5,567v1M755.5,568v1M755.5,569v1M755.5,573v1M755.5,574v1M755.5,575v1M755.5,579v1M755.5,580v1M755.5,581v1M755.5,585v1M755.5,586v1M755.5,587v1M755.5,591v1M755.5,592v1M755.5,593v1M755.5,597v1M755.5,598v1M755.5,599v1M755.5,603v1M755.5,604v1M755.5,605v1M755.5,609v1M755.5,610v1M755.5,611v1M755.5,615v1M755.5,616v1M755.5,617v1" stroke="#888888" stroke-width="1"/><rect x="487.5" y="444.5" width="335" height="177" fill="none" stroke="#B0B0B0" stroke-width="1"/><rect x="487" y="621" width="1" height="9" fill="#B0B0B0"/><rect x="554" y="621" width="1" height="9" fill="#B0B0B0"/><rect x="621" y="621" width="1" height="9" fill="#B0B0B0"/><rect x="688" y="621" width="1" height="9" fill="#B0B0B0"/><rect x="755" y="621" width="1" height="9" fill="#B0B0B0"/><text x="487.5" y="645" text-anchor="middle" font-family='"Liberation Sans", sans-serif' font-weight="bold" font-size="16" fill="#ACACAC">0µs</text><text x="554.5" y="645" text-anchor="middle" font-family='"Liberation Sans", sans-serif' font-weight="bold" font-size="16" fill="#ACACAC">4µs</text><text x="621.5" y="645" text-anchor="middle" font-family='"Liberation Sans", sans-serif' font-weight="bold" font-size="16" fill="#ACACAC">8µs</text><text x="688.5" y="645" text-anchor="middle" font-family='"Liberation Sans", sans-serif' font-weight="bold" font-size="16" fill="#ACACAC">12µs</text><text x="755.5" y="645" text-anchor="middle" font-family='"Liberation Sans", sans-serif' font-weight="bold" font-size="16" fill="#ACACAC">16µs</text><text x="654" y="44" text-anchor="middle" font-family='"Liberation Sans", sans-serif' font-weight="bold" font-size="16" fill="#B4B400" textLength="60" lengthAdjust="spacingAndGlyphs">V(n001)</text><text x="653" y="241" text-anchor="middle" font-family='"Liberation Sans", sans-serif' font-weight="bold" font-size="16" fill="#00E000" textLength="66.5" lengthAdjust="spacingAndGlyphs">V(sparc)</text><text x="654" y="438" text-anchor="middle" font-family='"Liberation Sans", sans-serif' font-weight="bold" font-size="16" fill="#F05040" textLength="75.5" lengthAdjust="spacingAndGlyphs">V(sparcc)</text><path d="M487.5,83V87M488.5,87V96M489.5,96V105M490.5,105V115M491.5,115V125M492.5,125V135M493.5,135V145M494.5,145V155M495.5,155V165M496.5,165V175M497.5,175V184M498.5,184V192M499.5,192V199M500.5,199V205M501.5,205V211M502.5,211V215M503.5,215V218M504.5,218V220M505.5,220V222M506.5,221V222M507.5,219V221M508.5,216V219M509.5,212V216M510.5,207V212M511.5,201V207M512.5,194V201M513.5,186V194M514.5,177V186M515.5,168V177M516.5,158V168M517.5,148V158M518.5,138V148M519.5,128V138M520.5,118V128M521.5,108V118M522.5,98V108M523.5,90V98M524.5,82V90M525.5,74V82M526.5,68V74M527.5,63V68M528.5,59V63M529.5,55V59M530.5,53V55M531.5,52V53M532.5,52V53M533.5,53V55M534.5,55V58M535.5,58V62M536.5,62V67M537.5,67V74M538.5,74V81M539.5,81V89M540.5,89V98M541.5,98V107M542.5,107V117M543.5,117V127M544.5,127V137M545.5,137V147M546.5,147V157M547.5,157V167M548.5,167V177M549.5,177V185M550.5,185V193M551.5,193V201M552.5,201V207M553.5,207V212M554.5,212V216M555.5,216V219M556.5,219V221M557.5,221V222M558.5,221V222M559.5,219V221M560.5,216V219M561.5,211V216M562.5,206V211M563.5,199V206M564.5,192V199M565.5,184V192M566.5,175V184M567.5,166V175M568.5,156V166M569.5,146V156M570.5,136V146M571.5,126V136M572.5,116V126M573.5,106V116M574.5,96V106M575.5,88V96M576.5,80V88M577.5,73V80M578.5,67V73M579.5,62V67M580.5,58V62M581.5,55V58M582.5,53V55M583.5,52V53M584.5,52V53M585.5,53V55M586.5,55V58M587.5,58V63M588.5,63V68M589.5,68V75M590.5,75V82M591.5,82V91M592.5,91V100M593.5,100V109M594.5,109V119M595.5,119V129M596.5,129V139M597.5,139V149M598.5,149V159M599.5,159V169M600.5,169V179M601.5,179V187M602.5,187V195M603.5,195V202M604.5,202V208M605.5,208V213M606.5,213V217M607.5,217V219M608.5,219V221M609.5,221V222M610.5,221V222M611.5,218V221M612.5,215V218M613.5,210V215M614.5,205V210M615.5,198V205M616.5,191V198M617.5,182V191M618.5,173V182M619.5,164V173M620.5,154V164M621.5,144V154M622.5,134V144M623.5,124V134M624.5,114V124M625.5,104V114M626.5,95V104M627.5,86V95M628.5,78V86M629.5,72V78M630.5,66V72M631.5,61V66M632.5,57V61M633.5,55V57M634.5,53V55M635.5,52V53M636.5,53V54M637.5,54V56M638.5,56V59M639.5,59V64M640.5,64V70M641.5,70V77M642.5,77V84M643.5,84V93M644.5,93V102M645.5,102V111M646.5,111V121M647.5,121V131M648.5,131V141M649.5,141V151M650.5,151V161M651.5,161V171M652.5,171V180M653.5,180V188M654.5,188V196M655.5,196V203M656.5,203V209M657.5,209V213M658.5,213V217M659.5,217V220M660.5,220V221M661.5,221V222M662.5,220V221M663.5,218V220M664.5,214V218M665.5,209V214M666.5,204V209M667.5,197V204M668.5,189V197M669.5,180V189M670.5,171V180M671.5,162V171M672.5,152V162M673.5,142V152M674.5,132V142M675.5,122V132M676.5,112V122M677.5,102V112M678.5,93V102M679.5,85V93M680.5,77V85M681.5,70V77M682.5,64V70M683.5,60V64M684.5,56V60M685.5,54V56M686.5,53V54M687.5,52V53M688.5,53V54M689.5,54V57M690.5,57V60M691.5,60V65M692.5,65V71M693.5,71V78M694.5,78V86M695.5,86V94M696.5,94V103M697.5,103V113M698.5,113V123M699.5,123V133M700.5,133V143M701.5,143V153M702.5,153V163M703.5,163V173M704.5,173V182M705.5,182V190M706.5,190V198M707.5,198V204M708.5,204V210M709.5,210V214M710.5,214V218M711.5,218V220M712.5,220V222M713.5,221V222M714.5,220V221M715.5,217V220M716.5,213V217M717.5,208V213M718.5,202V208M719.5,195V202M720.5,188V195M721.5,179V188M722.5,170V179M723.5,160V170M724.5,150V160M725.5,140V150M726.5,130V140M727.5,120V130M728.5,110V120M729.5,100V110M730.5,91V100M731.5,83V91M732.5,75V83M733.5,69V75M734.5,63V69M735.5,59V63M736.5,56V59M737.5,54V56M738.5,52V54M739.5,52V53M740.5,53V54M741.5,54V57M742.5,57V61M743.5,61V66M744.5,66V72M745.5,72V79M746.5,79V87M747.5,87V96M748.5,96V105M749.5,105V115M750.5,115V125M751.5,125V135M752.5,135V145M753.5,145V155M754.5,155V165M755.5,165V175M756.5,175V184M757.5,184V192M758.5,192V199M759.5,199V205M760.5,205V211M761.5,211V215M762.5,215V218M763.5,218V220M764.5,220V222M765.5,221V222M766.5,219V221M767.5,216V219M768.5,212V216M769.5,207V212M770.5,201V207M771.5,194V201M772.5,186V194M773.5,177V186M774.5,168V177M775.5,158V168M776.5,148V158M777.5,138V148M778.5,128V138M779.5,118V128M780.5,108V118M781.5,98V108M782.5,90V98M783.5,82V90M784.5,74V82M785.5,68V74M786.5,63V68M787.5,59V63M788.5,55V59M789.5,53V55M790.5,52V53M791.5,52V53M792.5,53V55M793.5,55V58M794.5,58V62M795.5,62V67M796.5,67V74M797.5,74V81M798.5,81V89M799.5,89V98M800.5,98V107M801.5,107V117M802.5,117V127M803.5,127V137M804.5,137V147M805.5,147V157M806.5,157V167M807.5,167V177M808.5,177V185M809.5,185V193M810.5,193V201M811.5,201V207M812.5,207V212M813.5,212V216M814.5,216V219M815.5,219V221M816.5,221V222M817.5,221V222M818.5,219V221M819.5,216V219M820.5,211V216M821.5,206V211M822.5,202V206" stroke="#B8B800" stroke-width="1" fill="none" shape-rendering="crispEdges"/><path d="M487.5,391V394M488.5,394V399M489.5,399V403M490.5,403V406M491.5,406V408M492.5,408V410M493.5,409V410M494.5,408V409M495.5,405V408M496.5,402V405M497.5,397V402M498.5,392V397M499.5,385V392M500.5,378V385M501.5,371V378M502.5,362V371M503.5,354V362M504.5,345V354M505.5,335V345M506.5,326V335M507.5,317V326M508.5,309V317M509.5,300V309M510.5,292V300M511.5,285V292M512.5,279V285M513.5,273V279M514.5,268V273M515.5,264V268M516.5,262V264M517.5,260V262M518.5,259V260M519.5,259V260M520.5,260V261M521.5,261V264M522.5,264V267M523.5,267V272M524.5,272V278M525.5,278V285M526.5,285V292M527.5,292V300M528.5,300V308M529.5,308V317M530.5,317V326M531.5,326V335M532.5,335V344M533.5,344V353M534.5,353V362M535.5,362V370M536.5,370V378M537.5,378V385M538.5,385V391M539.5,391V397M540.5,397V401M541.5,401V405M542.5,405V407M543.5,407V409M544.5,409V410M545.5,409V410M546.5,407V409M547.5,404V407M548.5,400V404M549.5,395V400M550.5,389V395M551.5,382V389M552.5,375V382M553.5,367V375M554.5,358V367M555.5,349V358M556.5,340V349M557.5,331V340M558.5,322V331M559.5,313V322M560.5,304V313M561.5,296V304M562.5,289V296M563.5,282V289M564.5,276V282M565.5,270V276M566.5,266V270M567.5,263V266M568.5,261V263M569.5,259V261M570.5,258V259M571.5,259V260M572.5,260V262M573.5,262V265M574.5,265V270M575.5,270V275M576.5,275V281M577.5,281V288M578.5,288V296M579.5,296V304M580.5,304V313M581.5,313V322M582.5,322V331M583.5,331V340M584.5,340V349M585.5,349V358M586.5,358V366M587.5,366V374M588.5,374V382M589.5,382V388M590.5,388V394M591.5,394V399M592.5,399V403M593.5,403V406M594.5,406V408M595.5,408V410M596.5,409V410M597.5,408V409M598.5,405V408M599.5,402V405M600.5,397V402M601.5,392V397M602.5,385V392M603.5,378V385M604.5,371V378M605.5,362V371M606.5,354V362M607.5,345V354M608.5,335V345M609.5,326V335M610.5,317V326M611.5,309V317M612.5,300V309M613.5,292V300M614.5,285V292M615.5,279V285M616.5,273V279M617.5,268V273M618.5,264V268M619.5,262V264M620.5,260V262M621.5,259V260M622.5,259V260M623.5,260V261M624.5,261V264M625.5,264V267M626.5,267V272M627.5,272V278M628.5,278V285M629.5,285V292M630.5,292V300M631.5,300V308M632.5,308V317M633.5,317V326M634.5,326V335M635.5,335V344M636.5,344V353M637.5,353V362M638.5,362V370M639.5,370V378M640.5,378V385M641.5,385V391M642.5,391V397M643.5,397V401M644.5,401V405M645.5,405V407M646.5,407V409M647.5,409V410M648.5,409V410M649.5,407V409M650.5,404V407M651.5,400V404M652.5,395V400M653.5,389V395M654.5,382V389M655.5,375V382M656.5,367V375M657.5,358V367M658.5,349V358M659.5,340V349M660.5,331V340M661.5,322V331M662.5,313V322M663.5,304V313M664.5,296V304M665.5,289V296M666.5,282V289M667.5,276V282M668.5,270V276M669.5,266V270M670.5,263V266M671.5,261V263M672.5,259V261M673.5,258V259M674.5,259V260M675.5,260V262M676.5,262V265M677.5,265V270M678.5,270V275M679.5,275V281M680.5,281V288M681.5,288V296M682.5,296V304M683.5,304V313M684.5,313V322M685.5,322V331M686.5,331V340M687.5,340V349M688.5,349V358M689.5,358V366M690.5,366V374M691.5,374V382M692.5,382V388M693.5,388V394M694.5,394V399M695.5,399V403M696.5,403V406M697.5,406V408M698.5,408V410M699.5,409V410M700.5,408V409M701.5,405V408M702.5,402V405M703.5,397V402M704.5,392V397M705.5,385V392M706.5,378V385M707.5,371V378M708.5,362V371M709.5,354V362M710.5,345V354M711.5,335V345M712.5,326V335M713.5,317V326M714.5,309V317M715.5,300V309M716.5,292V300M717.5,285V292M718.5,279V285M719.5,273V279M720.5,268V273M721.5,264V268M722.5,262V264M723.5,260V262M724.5,259V260M725.5,259V260M726.5,260V261M727.5,261V264M728.5,264V267M729.5,267V272M730.5,272V278M731.5,278V285M732.5,285V292M733.5,292V300M734.5,300V308M735.5,308V317M736.5,317V326M737.5,326V335M738.5,335V344M739.5,344V353M740.5,353V362M741.5,362V370M742.5,370V378M743.5,378V385M744.5,385V391M745.5,391V397M746.5,397V401M747.5,401V405M748.5,405V407M749.5,407V409M750.5,409V410M751.5,409V410M752.5,407V409M753.5,404V407M754.5,400V404M755.5,395V400M756.5,389V395M757.5,382V389M758.5,375V382M759.5,367V375M760.5,358V367M761.5,349V358M762.5,340V349M763.5,331V340M764.5,322V331M765.5,313V322M766.5,304V313M767.5,296V304M768.5,289V296M769.5,282V289M770.5,276V282M771.5,270V276M772.5,266V270M773.5,263V266M774.5,261V263M775.5,259V261M776.5,258V259M777.5,259V260M778.5,260V262M779.5,262V265M780.5,265V270M781.5,270V275M782.5,275V281M783.5,281V288M784.5,288V296M785.5,296V304M786.5,304V313M787.5,313V322M788.5,322V331M789.5,331V340M790.5,340V349M791.5,349V358M792.5,358V366M793.5,366V374M794.5,374V382M795.5,382V388M796.5,388V394M797.5,394V399M798.5,399V403M799.5,403V406M800.5,406V408M801.5,408V410M802.5,409V410M803.5,408V409M804.5,405V408M805.5,402V405M806.5,397V402M807.5,392V397M808.5,385V392M809.5,378V385M810.5,371V378M811.5,362V371M812.5,354V362M813.5,345V354M814.5,335V345M815.5,326V335M816.5,317V326M817.5,309V317M818.5,300V309M819.5,292V300M820.5,285V292M821.5,279V285M822.5,275V279" stroke="#00F000" stroke-width="1" fill="none" shape-rendering="crispEdges"/><path d="M487.5,470V473M488.5,465V470M489.5,461V465M490.5,458V461M491.5,456V458M492.5,455V456M493.5,455V456M494.5,456V458M495.5,458V461M496.5,461V464M497.5,464V469M498.5,469V475M499.5,475V482M500.5,482V489M501.5,489V497M502.5,497V506M503.5,506V515M504.5,515V525M505.5,525V534M506.5,534V543M507.5,543V553M508.5,553V562M509.5,562V570M510.5,570V578M511.5,578V586M512.5,586V592M513.5,592V598M514.5,598V602M515.5,602V606M516.5,606V608M517.5,608V610M518.5,610V611M519.5,610V611M520.5,608V610M521.5,605V608M522.5,600V605M523.5,595V600M524.5,589V595M525.5,582V589M526.5,575V582M527.5,566V575M528.5,557V566M529.5,548V557M530.5,539V548M531.5,530V539M532.5,520V530M533.5,511V520M534.5,502V511M535.5,494V502M536.5,486V494M537.5,479V486M538.5,473V479M539.5,467V473M540.5,463V467M541.5,459V463M542.5,457V459M543.5,456V457M544.5,455V456M545.5,456V457M546.5,457V459M547.5,459V462M548.5,462V467M549.5,467V472M550.5,472V479M551.5,479V486M552.5,486V493M553.5,493V502M554.5,502V511M555.5,511V520M556.5,520V529M557.5,529V539M558.5,539V548M559.5,548V557M560.5,557V566M561.5,566V574M562.5,574V582M563.5,582V589M564.5,589V595M565.5,595V600M566.5,600V604M567.5,604V607M568.5,607V609M569.5,609V611M570.5,610V611M571.5,609V610M572.5,606V609M573.5,603V606M574.5,598V603M575.5,593V598M576.5,586V593M577.5,579V586M578.5,571V579M579.5,562V571M580.5,553V562M581.5,544V553M582.5,534V544M583.5,525V534M584.5,516V525M585.5,506V516M586.5,498V506M587.5,490V498M588.5,482V490M589.5,476V482M590.5,470V476M591.5,465V470M592.5,461V465M593.5,458V461M594.5,456V458M595.5,455V456M596.5,455V456M597.5,456V458M598.5,458V461M599.5,461V464M600.5,464V469M601.5,469V475M602.5,475V482M603.5,482V489M604.5,489V497M605.5,497V506M606.5,506V515M607.5,515V525M608.5,525V534M609.5,534V543M610.5,543V553M611.5,553V562M612.5,562V570M613.5,570V578M614.5,578V586M615.5,586V592M616.5,592V598M617.5,598V602M618.5,602V606M619.5,606V608M620.5,608V610M621.5,610V611M622.5,610V611M623.5,608V610M624.5,605V608M625.5,600V605M626.5,595V600M627.5,589V595M628.5,582V589M629.5,575V582M630.5,566V575M631.5,557V566M632.5,548V557M633.5,539V548M634.5,530V539M635.5,520V530M636.5,511V520M637.5,502V511M638.5,494V502M639.5,486V494M640.5,479V486M641.5,473V479M642.5,467V473M643.5,463V467M644.5,459V463M645.5,457V459M646.5,456V457M647.5,455V456M648.5,456V457M649.5,457V459M650.5,459V462M651.5,462V467M652.5,467V472M653.5,472V479M654.5,479V486M655.5,486V493M656.5,493V502M657.5,502V511M658.5,511V520M659.5,520V529M660.5,529V539M661.5,539V548M662.5,548V557M663.5,557V566M664.5,566V574M665.5,574V582M666.5,582V589M667.5,589V595M668.5,595V600M669.5,600V604M670.5,604V607M671.5,607V609M672.5,609V611M673.5,610V611M674.5,609V610M675.5,606V609M676.5,603V606M677.5,598V603M678.5,593V598M679.5,586V593M680.5,579V586M681.5,571V579M682.5,562V571M683.5,553V562M684.5,544V553M685.5,534V544M686.5,525V534M687.5,516V525M688.5,506V516M689.5,498V506M690.5,490V498M691.5,482V490M692.5,476V482M693.5,470V476M694.5,465V470M695.5,461V465M696.5,458V461M697.5,456V458M698.5,455V456M699.5,455V456M700.5,456V458M701.5,458V461M702.5,461V464M703.5,464V469M704.5,469V475M705.5,475V482M706.5,482V489M707.5,489V497M708.5,497V506M709.5,506V515M710.5,515V525M711.5,525V534M712.5,534V543M713.5,543V553M714.5,553V562M715.5,562V570M716.5,570V578M717.5,578V586M718.5,586V592M719.5,592V598M720.5,598V602M721.5,602V606M722.5,606V608M723.5,608V610M724.5,610V611M725.5,610V611M726.5,608V610M727.5,605V608M728.5,600V605M729.5,595V600M730.5,589V595M731.5,582V589M732.5,575V582M733.5,566V575M734.5,557V566M735.5,548V557M736.5,539V548M737.5,530V539M738.5,520V530M739.5,511V520M740.5,502V511M741.5,494V502M742.5,486V494M743.5,479V486M744.5,473V479M745.5,467V473M746.5,463V467M747.5,459V463M748.5,457V459M749.5,456V457M750.5,455V456M751.5,456V457M752.5,457V459M753.5,459V462M754.5,462V467M755.5,467V472M756.5,472V479M757.5,479V486M758.5,486V493M759.5,493V502M760.5,502V511M761.5,511V520M762.5,520V529M763.5,529V539M764.5,539V548M765.5,548V557M766.5,557V566M767.5,566V574M768.5,574V582M769.5,582V589M770.5,589V595M771.5,595V600M772.5,600V604M773.5,604V607M774.5,607V609M775.5,609V611M776.5,610V611M777.5,609V610M778.5,606V609M779.5,603V606M780.5,598V603M781.5,593V598M782.5,586V593M783.5,579V586M784.5,571V579M785.5,562V571M786.5,553V562M787.5,544V553M788.5,534V544M789.5,525V534M790.5,516V525M791.5,506V516M792.5,498V506M793.5,490V498M794.5,482V490M795.5,476V482M796.5,470V476M797.5,465V470M798.5,461V465M799.5,458V461M800.5,456V458M801.5,455V456M802.5,455V456M803.5,456V458M804.5,458V461M805.5,461V464M806.5,464V469M807.5,469V475M808.5,475V482M809.5,482V489M810.5,489V497M811.5,497V506M812.5,506V515M813.5,515V525M814.5,525V534M815.5,534V543M816.5,543V553M817.5,553V562M818.5,562V570M819.5,570V578M820.5,578V586M821.5,586V592M822.5,592V596" stroke="#F05050" stroke-width="1" fill="none" shape-rendering="crispEdges"/></g>
</svg></body></html>
